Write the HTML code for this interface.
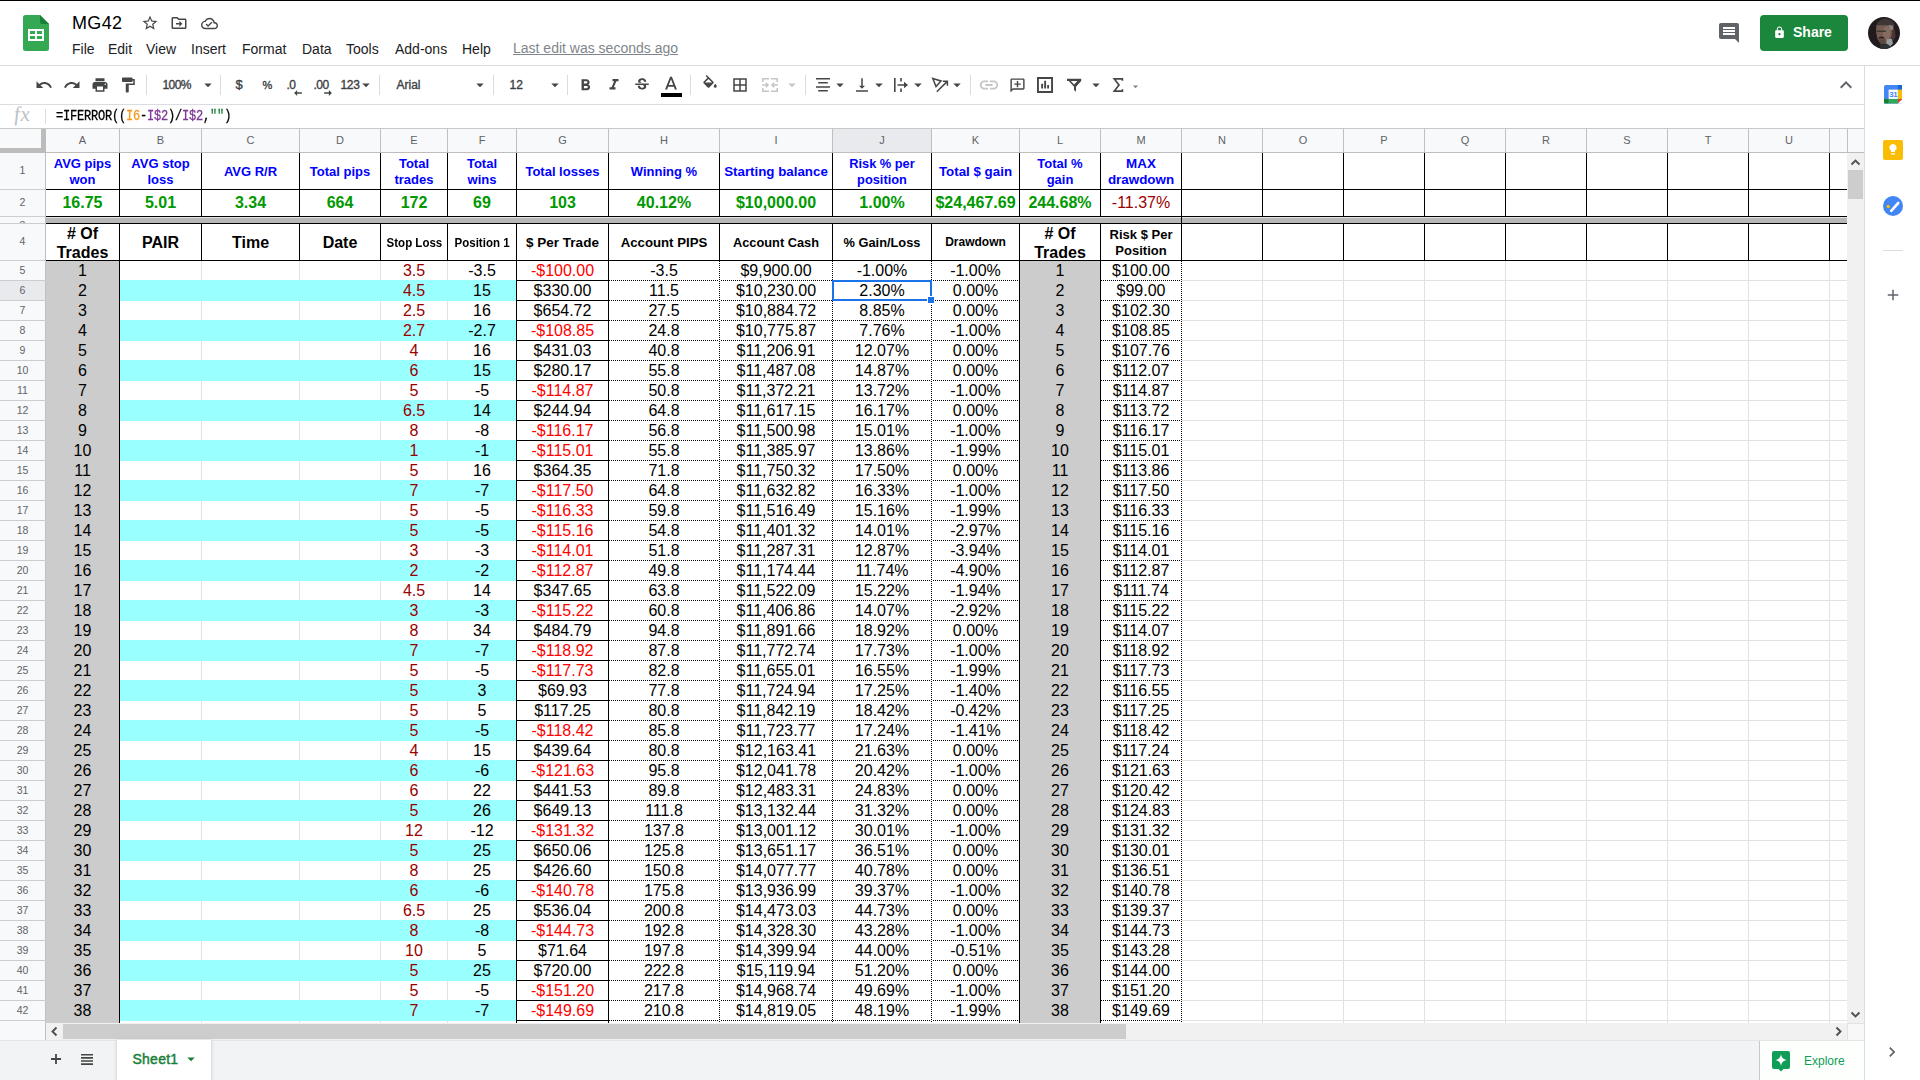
<!DOCTYPE html>
<html><head><meta charset="utf-8"><title>MG42 - Google Sheets</title>
<style>
html,body{margin:0;padding:0;}
body{width:1920px;height:1080px;overflow:hidden;background:#fff;font-family:"Liberation Sans",sans-serif;position:relative;color:#202124;}
#app{position:absolute;left:0;top:0;width:1920px;height:1080px;overflow:hidden;}
#app div,#app svg,#app span.a{position:absolute;}
#grid{left:0;top:0;width:1847px;height:1023px;overflow:hidden;}
#grid div{position:absolute;}
.t{text-align:center;white-space:nowrap;overflow:visible;color:#000;}
.m{display:flex;align-items:center;justify-content:center;}
.m span{display:block;}
.d{font-size:16px;}
.dr{color:#990000;}
.rd{color:#ff0000;}
.r1{font-size:13px;font-weight:bold;color:#0000ff;}
.r2{font-size:16px;font-weight:bold;color:#009900;}
.r2m{font-size:16px;color:#990000;}
.hb{font-weight:bold;}
.h13{font-size:13.33px;font-weight:bold;}
.h12{font-size:12px;font-weight:bold;}
.ch{font-size:11px;color:#5f6368;}
.rh{font-size:10.5px;color:#5f6368;}
.dh{height:1px;background:repeating-linear-gradient(90deg,#000 0 1px,#fff 1px 2px);}
.dv{width:1px;background:repeating-linear-gradient(180deg,#000 0 1px,#fff 1px 2px);}
.menu{top:40px;height:18px;line-height:18px;font-size:14px;color:#202124;white-space:nowrap;}
.ic{width:18px;height:18px;top:76px;fill:#444746;}
.sep{top:75px;width:1px;height:20px;background:#dadce0;}
.dd{width:18px;height:18px;top:76px;fill:#444746;}
.tb{top:76px;height:18px;line-height:18px;font-size:12px;color:#3c4043;white-space:nowrap;letter-spacing:-0.5px;-webkit-text-stroke:0.35px #3c4043;}
</style></head><body><div id="app">

<!-- top black line -->
<div style="left:0;top:0;width:1920px;height:1px;background:#000"></div>
<!-- Sheets logo -->
<svg style="left:23px;top:15px;width:26px;height:36px" viewBox="0 0 26 36">
<path d="M2.5 0H17l9 9v24.5a2.5 2.5 0 0 1-2.5 2.5h-21A2.5 2.5 0 0 1 0 33.500V2.5A2.500 2.500 0 0 1 2.500 0z" fill="#34a853"/>
<path d="M17 0l9 9h-6.500A2.500 2.500 0 0 1 17 6.500z" fill="#188038"/>
<path d="M5 14h16v12H5zM7 16v3h5v-3zM14 16v3h5v-3zM7 21v3h5v-3zM14 21v3h5v-3z" fill="#fff" fill-rule="evenodd"/>
</svg>
<!-- title -->
<div style="left:72px;top:11px;height:24px;line-height:24px;font-size:18px;letter-spacing:0.35px;color:#000;white-space:nowrap">MG42</div>
<svg style="left:141px;top:14px;width:18px;height:18px;fill:#444746" viewBox="0 0 24 24"><path d="M22 9.240l-7.190-.62L12 2 9.190 8.630 2 9.240l5.460 4.730L5.820 21 12 17.270 18.180 21l-1.630-7.030L22 9.240zM12 15.400l-3.760 2.270 1-4.280-3.320-2.880 4.380-.38L12 6.100l1.710 4.040 4.380.38-3.320 2.880 1 4.280L12 15.400z"/></svg>
<svg style="left:170px;top:14px;width:18px;height:18px;fill:#444746" viewBox="0 0 24 24"><path d="M20 6h-8l-2-2H4c-1.100 0-2 .9-2 2v12c0 1.100.9 2 2 2h16c1.100 0 2-.9 2-2V8c0-1.100-.9-2-2-2zm0 12H4V6h5.170l2 2H20v10zm-7.500-1l4-4-4-4v3H8v2h4.500v3z"/></svg>
<svg style="left:201px;top:15px;width:17px;height:17px;fill:#444746" viewBox="0 0 24 24"><path d="M19.350 10.040C18.670 6.590 15.640 4 12 4 9.110 4 6.600 5.640 5.350 8.040 2.340 8.360 0 10.910 0 14c0 3.310 2.690 6 6 6h13c2.760 0 5-2.240 5-5 0-2.640-2.050-4.780-4.650-4.960zM19 18H6c-2.210 0-4-1.790-4-4 0-2.050 1.530-3.760 3.560-3.970l1.070-.11.5-.95C8.080 7.140 9.940 6 12 6c2.620 0 4.880 1.860 5.390 4.430l.3 1.500 1.530.11c1.560.1 2.780 1.410 2.780 2.960 0 1.650-1.350 3-3 3zm-9-3.820l-2.090-2.090L6.500 13.500 10 17l6.010-6.010-1.410-1.410z"/></svg>
<!-- menus -->
<div class="menu" style="left:72px">File</div>
<div class="menu" style="left:108px">Edit</div>
<div class="menu" style="left:146px">View</div>
<div class="menu" style="left:191px">Insert</div>
<div class="menu" style="left:242px">Format</div>
<div class="menu" style="left:302px">Data</div>
<div class="menu" style="left:346px">Tools</div>
<div class="menu" style="left:395px">Add-ons</div>
<div class="menu" style="left:462px">Help</div>
<div class="menu" style="left:513px;top:39px;color:#80868b;text-decoration:underline">Last edit was seconds ago</div>
<!-- comment / share / avatar -->
<svg style="left:1717px;top:21px;width:24px;height:24px;fill:#5f6368" viewBox="0 0 24 24"><path d="M21.990 4c0-1.100-.89-2-1.990-2H4c-1.100 0-2 .9-2 2v12c0 1.100.9 2 2 2h14l4 4-.01-18zM18 14H6v-2h12v2zm0-3H6V9h12v2zm0-3H6V6h12v2z"/></svg>
<div style="left:1760px;top:15px;width:88px;height:36px;border-radius:4px;background:#1b873d"></div>
<svg style="left:1773px;top:26px;width:13px;height:13px;fill:#fff" viewBox="0 0 24 24"><path d="M18 8h-1V6c0-2.760-2.240-5-5-5S7 3.240 7 6v2H6c-1.100 0-2 .9-2 2v10c0 1.100.9 2 2 2h12c1.100 0 2-.9 2-2V10c0-1.100-.9-2-2-2zm-6 9c-1.100 0-2-.9-2-2s.9-2 2-2 2 .9 2 2-.9 2-2 2zm3.100-9H8.900V6c0-1.710 1.390-3.100 3.100-3.100 1.710 0 3.100 1.390 3.100 3.100v2z"/></svg>
<div style="left:1793px;top:22px;height:20px;line-height:20px;font-size:14px;font-weight:bold;color:#fff;white-space:nowrap">Share</div>
<svg style="left:1868px;top:17px;width:32px;height:32px" viewBox="0 0 32 32">
<defs><clipPath id="avc"><circle cx="16" cy="16" r="16"/></clipPath><filter id="avb" x="-20%" y="-20%" width="140%" height="140%"><feGaussianBlur stdDeviation="0.7"/></filter></defs>
<g clip-path="url(#avc)"><rect width="32" height="32" fill="#221b1d"/>
<g filter="url(#avb)">
<path d="M8.500 8.500C9.500 3.500 14 1.300 18.500 1.800c4.500.5 7.500 3 8 7.200l-3.500 1-13.500-1z" fill="#3d3735"/>
<path d="M8.300 8.200h14.500l2 2.500-.3 7-2.200 5-5 4.300-4.800-.5-3-4.500-1.500-7z" fill="#735b51"/>
<ellipse cx="18.600" cy="16" rx="3.800" ry="7" fill="#866c61"/>
<path d="M20.800 8l4.500.8.300 4.200-3.800-.3z" fill="#8d827b"/>
<path d="M24 12.500l3 1 .5 6-2.500 5-1.500-4z" fill="#4a3431"/>
<rect x="8.500" y="13.500" width="9.500" height="1.500" fill="#3f3a33"/>
<path d="M10 21.800c1-2.400 4.500-3 6.300-1.300l.2 1.600c-2-.8-4.500-.6-6.500-.3z" fill="#33201d"/>
<path d="M11 22.500h6.500l-.5 4-4.500-.3z" fill="#5d463f"/>
<path d="M19 22.300l4.800-.5 1.200 4.800-3 2.800-4-1.600z" fill="#969ea1"/>
<path d="M11.800 27l4.200.8 2.200-1.200 3.200 1.700-.8 3.700h-8z" fill="#2a3033"/>
</g></g></svg>
<!-- header bottom border -->
<div style="left:0;top:65px;width:1920px;height:1px;background:#dadce0"></div>
<!-- toolbar -->
<svg class="ic" style="left:35px" viewBox="0 0 24 24"><path d="M12.500 8c-2.650 0-5.050.99-6.900 2.600L2 7v9h9l-3.620-3.620c1.390-1.160 3.160-1.880 5.120-1.880 3.540 0 6.550 2.310 7.600 5.500l2.370-.78C21.080 11.030 17.150 8 12.500 8z"/></svg>
<svg class="ic" style="left:63px" viewBox="0 0 24 24"><path d="M18.400 10.600C16.550 8.990 14.150 8 11.500 8c-4.650 0-8.580 3.030-9.960 7.220L3.900 16c1.050-3.190 4.050-5.500 7.600-5.500 1.950 0 3.730.72 5.120 1.880L13 16h9V7l-3.600 3.600z"/></svg>
<svg class="ic" style="left:91px" viewBox="0 0 24 24"><path d="M19 8H5c-1.660 0-3 1.340-3 3v6h4v4h12v-4h4v-6c0-1.660-1.340-3-3-3zm-3 11H8v-5h8v5zm3-7c-.55 0-1-.45-1-1s.45-1 1-1 1 .45 1 1-.45 1-1 1zm-1-9H6v4h12V3z"/></svg>
<svg class="ic" style="left:119px" viewBox="0 0 24 24"><path d="M18 4V3c0-.55-.45-1-1-1H5c-.55 0-1 .45-1 1v4c0 .55.45 1 1 1h12c.55 0 1-.45 1-1V6h1v4H9v11c0 .55.45 1 1 1h2c.55 0 1-.45 1-1v-9h8V4h-3z"/></svg>
<div class="sep" style="left:146px"></div>
<div class="tb" style="left:162.500px;letter-spacing:-0.600px">100%</div>
<svg class="dd" style="left:199px" viewBox="0 0 24 24"><path d="M7 10l5 5 5-5z"/></svg>
<div class="sep" style="left:220px"></div>
<div class="tb" style="left:235.500px;font-size:13px">$</div>
<div class="tb" style="left:262.500px;font-size:11px;letter-spacing:0">%</div>
<div class="tb" style="left:286.500px">.0</div>
<svg style="left:294px;top:90px;width:8px;height:6px;fill:#444746" viewBox="0 0 9 7"><path d="M3.500 0L0 3.500 3.500 7V4.300H9V2.700H3.500z"/></svg>
<div class="tb" style="left:313.500px">.00</div>
<svg style="left:324px;top:90px;width:8px;height:6px;fill:#444746" viewBox="0 0 9 7"><path d="M5.500 0L9 3.500 5.500 7V4.300H0V2.700h5.500z"/></svg>
<div class="tb" style="left:340.500px;letter-spacing:-0.300px">123</div>
<svg class="dd" style="left:357px" viewBox="0 0 24 24"><path d="M7 10l5 5 5-5z"/></svg>
<div class="sep" style="left:379px"></div>
<div class="tb" style="left:396.500px;letter-spacing:0">Arial</div>
<svg class="dd" style="left:471px" viewBox="0 0 24 24"><path d="M7 10l5 5 5-5z"/></svg>
<div class="sep" style="left:493px"></div>
<div class="tb" style="left:509.500px;letter-spacing:0">12</div>
<svg class="dd" style="left:546px" viewBox="0 0 24 24"><path d="M7 10l5 5 5-5z"/></svg>
<div class="sep" style="left:567px"></div>
<svg class="ic" style="left:575.500px;top:75.500px;width:19px;height:19px" viewBox="0 0 24 24"><path d="M15.600 10.790c.97-.67 1.650-1.770 1.650-2.790 0-2.260-1.750-4-4-4H7v14h7.040c2.090 0 3.710-1.700 3.710-3.790 0-1.520-.86-2.820-2.150-3.420zM10 6.500h3c.83 0 1.500.67 1.500 1.500s-.67 1.500-1.500 1.500h-3v-3zm3.500 9H10v-3h3.500c.83 0 1.500.67 1.500 1.500s-.67 1.500-1.500 1.500z"/></svg>
<svg class="ic" style="left:605px" viewBox="0 0 24 24"><path d="M10 4v3h2.210l-3.420 8H6v3h8v-3h-2.210l3.420-8H18V4z"/></svg>
<svg class="ic" style="left:633px" viewBox="0 0 24 24"><path d="M7.240 8.750c-.26-.48-.39-1.030-.39-1.670 0-.61.130-1.160.4-1.670.26-.5.630-.93 1.110-1.290.48-.35 1.050-.63 1.700-.83.660-.19 1.390-.29 2.180-.29.810 0 1.540.11 2.210.34.660.22 1.230.54 1.690.94.470.4.830.88 1.080 1.430.25.550.38 1.150.38 1.810h-3.010c0-.31-.05-.59-.15-.85-.09-.27-.24-.49-.44-.68-.2-.19-.45-.33-.75-.44-.3-.1-.66-.16-1.060-.16-.39 0-.74.04-1.030.13-.29.09-.53.21-.72.360-.19.160-.34.340-.44.550-.1.210-.15.430-.15.660 0 .48.250.88.740 1.210.38.250.77.480 1.410.7H7.390c-.05-.08-.11-.17-.15-.25zM21 12v-2H3v2h9.620c.18.070.4.140.55.2.37.170.66.340.87.510.21.170.35.360.43.570.07.2.11.430.11.690 0 .23-.05.450-.14.660-.09.2-.23.380-.42.530-.19.150-.42.260-.71.350-.29.080-.63.130-1.010.13-.43 0-.83-.04-1.180-.13s-.66-.23-.91-.42c-.25-.19-.45-.44-.59-.75-.14-.31-.25-.76-.25-1.210H6.400c0 .55.080 1.130.24 1.580.16.450.37.850.65 1.210.28.350.6.660.98.920.37.260.78.480 1.220.65.440.17.900.3 1.380.39.480.08.960.13 1.440.13.8 0 1.530-.09 2.180-.28s1.210-.45 1.670-.79c.46-.34.820-.77 1.070-1.270s.38-1.070.38-1.710c0-.6-.1-1.140-.31-1.610-.05-.11-.11-.23-.17-.33H21z"/></svg>
<svg class="ic" style="left:660px;top:74px;width:22px;height:22px" viewBox="0 0 24 24"><path d="M11 3L5.500 17h2.250l1.120-3h6.250l1.120 3h2.250L13 3h-2zm-1.380 9L12 5.670 14.380 12H9.620z"/></svg>
<div style="left:661px;top:93px;width:21px;height:4px;background:#000"></div>
<div class="sep" style="left:690px"></div>
<svg class="ic" style="left:701px;top:75px" viewBox="0 0 24 24"><path d="M16.560 8.940L7.620 0 6.210 1.410l2.380 2.380-5.150 5.150c-.59.59-.59 1.540 0 2.120l5.500 5.500c.29.29.68.44 1.060.44s.77-.15 1.060-.44l5.500-5.500c.59-.58.59-1.530 0-2.120zM5.210 10L10 5.210 14.790 10H5.210zM19 11.500s-2 2.170-2 3.500c0 1.100.9 2 2 2s2-.9 2-2c0-1.330-2-3.500-2-3.500z"/></svg>
<svg class="ic" style="left:731px" viewBox="0 0 24 24"><path d="M3 3v18h18V3H3zm8 16H5v-6h6v6zm0-8H5V5h6v6zm8 8h-6v-6h6v6zm0-8h-6V5h6v6z"/></svg>
<!-- merge (disabled) -->
<svg style="left:761px;top:76px;width:18px;height:18px;fill:none;stroke:#c4c7c5;stroke-width:1.600" viewBox="0 0 18 18"><path d="M1.800 6V2.800H8M10 2.800h6.200V6M1.800 12v3.200H8M10 15.200h6.200V12M1.200 9h5.600M4.800 6.800L7 9l-2.200 2.200M16.800 9h-5.600M13.200 6.800L11 9l2.200 2.200"/></svg>
<svg style="left:783px;top:76px;width:18px;height:18px;fill:#c4c7c5" viewBox="0 0 24 24"><path d="M7 10l5 5 5-5z"/></svg>
<div class="sep" style="left:805px"></div>
<svg class="ic" style="left:814px" viewBox="0 0 18 18"><path d="M2 2.100h14v1.500H2zM4.200 6.100h9.600v1.500H4.200zM2 10.200h14v1.500H2zM4.200 14.100h9.600v1.500H4.200z"/></svg>
<svg class="dd" style="left:831px" viewBox="0 0 24 24"><path d="M7 10l5 5 5-5z"/></svg>
<svg class="ic" style="left:853px" viewBox="0 0 24 24"><path d="M16 13h-3V3h-2v10H8l4 4 4-4zM4 19v2h16v-2H4z"/></svg>
<svg class="dd" style="left:870px" viewBox="0 0 24 24"><path d="M7 10l5 5 5-5z"/></svg>
<!-- overflow/wrap icon -->
<svg class="ic" style="left:892px" viewBox="0 0 18 18"><path d="M2 2h1.600v14H2zM8.200 2h1.600v3.500H8.200zM8.200 12.500h1.600V16H8.200zM5.500 8.200h6.500V5.800L16 9l-4 3.200V9.800H5.500z"/></svg>
<svg class="dd" style="left:909px" viewBox="0 0 24 24"><path d="M7 10l5 5 5-5z"/></svg>
<!-- rotate icon -->
<svg class="ic" style="left:931px;fill:none;stroke:#444746;stroke-width:1.500" viewBox="0 0 18 18"><path d="M1.800 2.500L10 5l-5 5.600zM5.800 15.800L16 5.600M11.800 5.200h4.600v4.600" stroke-linejoin="miter"/></svg>
<svg class="dd" style="left:948px" viewBox="0 0 24 24"><path d="M7 10l5 5 5-5z"/></svg>
<div class="sep" style="left:970px"></div>
<svg style="left:978px;top:74px;width:22px;height:22px;fill:#c4c7c5" viewBox="0 0 24 24"><path d="M3.900 12c0-1.710 1.390-3.100 3.100-3.100h4V7H7c-2.760 0-5 2.240-5 5s2.240 5 5 5h4v-1.900H7c-1.710 0-3.100-1.390-3.100-3.100zM8 13h8v-2H8v2zm9-6h-4v1.900h4c1.710 0 3.100 1.390 3.100 3.100s-1.390 3.100-3.100 3.100h-4V17h4c2.760 0 5-2.240 5-5s-2.240-5-5-5z"/></svg>
<svg class="ic" style="left:1008.500px;top:76.500px;width:17px;height:17px;transform:scaleX(-1)" viewBox="0 0 24 24"><path d="M22 4c0-1.100-.9-2-2-2H4c-1.100 0-2 .9-2 2v12c0 1.100.9 2 2 2h14l4 4V4zm-2 13.170L18.830 16H4V4h16v13.170zM13 5.500h-2v3.500H7.500v2H11v3.500h2V11h3.500V9H13z"/></svg>
<svg class="ic" style="left:1036px;top:76px;width:18px;height:18px" viewBox="0 0 18 18"><path d="M1 1h16v16H1zM2.900 2.900v12.200h12.200V2.900zM5.200 7.800h1.900v4.700H5.200zM8.200 4.700h1.900v7.800H8.200zM11.200 9h1.800v3.500h-1.800z" fill-rule="evenodd"/></svg>
<svg class="ic" style="left:1065px;top:76px" viewBox="0 0 18 18"><path d="M2 2.800h14.200v2.100l-5.200 5.900v4.900l-2-1.700v-3.200L3.800 4.900H2zM5.900 4.900l3.200 3.700 3.200-3.700z" fill-rule="evenodd"/></svg>
<svg class="dd" style="left:1087px" viewBox="0 0 24 24"><path d="M7 10l5 5 5-5z"/></svg>
<svg class="ic" style="left:1109px;top:76px;fill:none;stroke:#444746;stroke-width:1.700" viewBox="0 0 18 18"><path d="M13.400 4.800V2.900H5.300l4.700 6.100-4.700 6.100h8.100V13.200" stroke-linejoin="miter" stroke-miterlimit="3"/></svg>
<svg style="left:1129px;top:79.500px;width:13px;height:13px;fill:#80868b" viewBox="0 0 24 24"><path d="M7 10l5 5 5-5z"/></svg>
<svg style="left:1834px;top:73px;width:24px;height:24px;fill:#5f6368" viewBox="0 0 24 24"><path d="M12 8l-6 6 1.410 1.410L12 10.830l4.590 4.580L18 14z"/></svg>
<!-- toolbar bottom border -->
<div style="left:0;top:104px;width:1864px;height:1px;background:#dadce0"></div>
<!-- formula bar -->
<div style="left:14px;top:103px;height:23px;line-height:22px;font-family:'Liberation Serif',serif;font-style:italic;font-size:21px;color:#bdc1c6;white-space:nowrap;letter-spacing:0.5px;transform:skewX(3deg)">fx</div>
<div style="left:45px;top:109px;width:1px;height:15px;background:#dadce0"></div>
<div id="fm" style="left:56px;top:106px;height:20px;line-height:20px;font-family:'Liberation Mono',monospace;font-size:12px;letter-spacing:-0.200px;transform:scaleY(1.180);transform-origin:left center;color:#000;-webkit-text-stroke:0.250px;white-space:nowrap">=IFERROR((<span style="color:#f7981d">I6</span>-<span style="color:#7e3794">I$2</span>)/<span style="color:#7e3794">I$2</span>,<span style="color:#188038">""</span>)</div>
<div style="left:0;top:128px;width:1864px;height:1px;background:#c8c8c8"></div>

<div id="grid">
<div style="left:0px;top:129px;width:1847px;height:894px;background:#fff;"></div>
<div style="left:119px;top:261px;width:1px;height:762px;background:#e2e2e2;"></div>
<div style="left:201px;top:261px;width:1px;height:762px;background:#e2e2e2;"></div>
<div style="left:299px;top:261px;width:1px;height:762px;background:#e2e2e2;"></div>
<div style="left:380px;top:261px;width:1px;height:762px;background:#e2e2e2;"></div>
<div style="left:447px;top:261px;width:1px;height:762px;background:#e2e2e2;"></div>
<div style="left:516px;top:261px;width:1px;height:762px;background:#e2e2e2;"></div>
<div style="left:608px;top:261px;width:1px;height:762px;background:#e2e2e2;"></div>
<div style="left:719px;top:261px;width:1px;height:762px;background:#e2e2e2;"></div>
<div style="left:832px;top:261px;width:1px;height:762px;background:#e2e2e2;"></div>
<div style="left:931px;top:261px;width:1px;height:762px;background:#e2e2e2;"></div>
<div style="left:1019px;top:261px;width:1px;height:762px;background:#e2e2e2;"></div>
<div style="left:1100px;top:261px;width:1px;height:762px;background:#e2e2e2;"></div>
<div style="left:1181px;top:261px;width:1px;height:762px;background:#e2e2e2;"></div>
<div style="left:1262px;top:261px;width:1px;height:762px;background:#e2e2e2;"></div>
<div style="left:1343px;top:261px;width:1px;height:762px;background:#e2e2e2;"></div>
<div style="left:1424px;top:261px;width:1px;height:762px;background:#e2e2e2;"></div>
<div style="left:1505px;top:261px;width:1px;height:762px;background:#e2e2e2;"></div>
<div style="left:1586px;top:261px;width:1px;height:762px;background:#e2e2e2;"></div>
<div style="left:1667px;top:261px;width:1px;height:762px;background:#e2e2e2;"></div>
<div style="left:1748px;top:261px;width:1px;height:762px;background:#e2e2e2;"></div>
<div style="left:1829px;top:261px;width:1px;height:762px;background:#e2e2e2;"></div>
<div style="left:46px;top:280px;width:1801px;height:1px;background:#e2e2e2;"></div>
<div style="left:46px;top:300px;width:1801px;height:1px;background:#e2e2e2;"></div>
<div style="left:46px;top:320px;width:1801px;height:1px;background:#e2e2e2;"></div>
<div style="left:46px;top:340px;width:1801px;height:1px;background:#e2e2e2;"></div>
<div style="left:46px;top:360px;width:1801px;height:1px;background:#e2e2e2;"></div>
<div style="left:46px;top:380px;width:1801px;height:1px;background:#e2e2e2;"></div>
<div style="left:46px;top:400px;width:1801px;height:1px;background:#e2e2e2;"></div>
<div style="left:46px;top:420px;width:1801px;height:1px;background:#e2e2e2;"></div>
<div style="left:46px;top:440px;width:1801px;height:1px;background:#e2e2e2;"></div>
<div style="left:46px;top:460px;width:1801px;height:1px;background:#e2e2e2;"></div>
<div style="left:46px;top:480px;width:1801px;height:1px;background:#e2e2e2;"></div>
<div style="left:46px;top:500px;width:1801px;height:1px;background:#e2e2e2;"></div>
<div style="left:46px;top:520px;width:1801px;height:1px;background:#e2e2e2;"></div>
<div style="left:46px;top:540px;width:1801px;height:1px;background:#e2e2e2;"></div>
<div style="left:46px;top:560px;width:1801px;height:1px;background:#e2e2e2;"></div>
<div style="left:46px;top:580px;width:1801px;height:1px;background:#e2e2e2;"></div>
<div style="left:46px;top:600px;width:1801px;height:1px;background:#e2e2e2;"></div>
<div style="left:46px;top:620px;width:1801px;height:1px;background:#e2e2e2;"></div>
<div style="left:46px;top:640px;width:1801px;height:1px;background:#e2e2e2;"></div>
<div style="left:46px;top:660px;width:1801px;height:1px;background:#e2e2e2;"></div>
<div style="left:46px;top:680px;width:1801px;height:1px;background:#e2e2e2;"></div>
<div style="left:46px;top:700px;width:1801px;height:1px;background:#e2e2e2;"></div>
<div style="left:46px;top:720px;width:1801px;height:1px;background:#e2e2e2;"></div>
<div style="left:46px;top:740px;width:1801px;height:1px;background:#e2e2e2;"></div>
<div style="left:46px;top:760px;width:1801px;height:1px;background:#e2e2e2;"></div>
<div style="left:46px;top:780px;width:1801px;height:1px;background:#e2e2e2;"></div>
<div style="left:46px;top:800px;width:1801px;height:1px;background:#e2e2e2;"></div>
<div style="left:46px;top:820px;width:1801px;height:1px;background:#e2e2e2;"></div>
<div style="left:46px;top:840px;width:1801px;height:1px;background:#e2e2e2;"></div>
<div style="left:46px;top:860px;width:1801px;height:1px;background:#e2e2e2;"></div>
<div style="left:46px;top:880px;width:1801px;height:1px;background:#e2e2e2;"></div>
<div style="left:46px;top:900px;width:1801px;height:1px;background:#e2e2e2;"></div>
<div style="left:46px;top:920px;width:1801px;height:1px;background:#e2e2e2;"></div>
<div style="left:46px;top:940px;width:1801px;height:1px;background:#e2e2e2;"></div>
<div style="left:46px;top:960px;width:1801px;height:1px;background:#e2e2e2;"></div>
<div style="left:46px;top:980px;width:1801px;height:1px;background:#e2e2e2;"></div>
<div style="left:46px;top:1000px;width:1801px;height:1px;background:#e2e2e2;"></div>
<div style="left:46px;top:1020px;width:1801px;height:1px;background:#e2e2e2;"></div>
<div style="left:46px;top:1040px;width:1801px;height:1px;background:#e2e2e2;"></div>
<div style="left:46px;top:261px;width:73px;height:762px;background:#cccccc;"></div>
<div style="left:1020px;top:261px;width:80px;height:762px;background:#cccccc;"></div>
<div style="left:120px;top:280px;width:397px;height:21px;background:#99ffff;"></div>
<div style="left:120px;top:320px;width:397px;height:21px;background:#99ffff;"></div>
<div style="left:120px;top:360px;width:397px;height:21px;background:#99ffff;"></div>
<div style="left:120px;top:400px;width:397px;height:21px;background:#99ffff;"></div>
<div style="left:120px;top:440px;width:397px;height:21px;background:#99ffff;"></div>
<div style="left:120px;top:480px;width:397px;height:21px;background:#99ffff;"></div>
<div style="left:120px;top:520px;width:397px;height:21px;background:#99ffff;"></div>
<div style="left:120px;top:560px;width:397px;height:21px;background:#99ffff;"></div>
<div style="left:120px;top:600px;width:397px;height:21px;background:#99ffff;"></div>
<div style="left:120px;top:640px;width:397px;height:21px;background:#99ffff;"></div>
<div style="left:120px;top:680px;width:397px;height:21px;background:#99ffff;"></div>
<div style="left:120px;top:720px;width:397px;height:21px;background:#99ffff;"></div>
<div style="left:120px;top:760px;width:397px;height:21px;background:#99ffff;"></div>
<div style="left:120px;top:800px;width:397px;height:21px;background:#99ffff;"></div>
<div style="left:120px;top:840px;width:397px;height:21px;background:#99ffff;"></div>
<div style="left:120px;top:880px;width:397px;height:21px;background:#99ffff;"></div>
<div style="left:120px;top:920px;width:397px;height:21px;background:#99ffff;"></div>
<div style="left:120px;top:960px;width:397px;height:21px;background:#99ffff;"></div>
<div style="left:120px;top:1000px;width:397px;height:21px;background:#99ffff;"></div>
<div style="left:46px;top:217px;width:1801px;height:6px;background:#b7b7b7;"></div>
<div style="left:46px;top:217px;width:1801px;height:1px;background:#e6e6e6;"></div>
<div style="left:1181px;top:217px;width:1px;height:6px;background:#000;"></div>
<div style="left:46px;top:189px;width:1801px;height:1px;background:#000;"></div>
<div style="left:46px;top:216px;width:1801px;height:1px;background:#000;"></div>
<div style="left:46px;top:223px;width:1801px;height:1px;background:#000;"></div>
<div style="left:46px;top:260px;width:1801px;height:1px;background:#000;"></div>
<div style="left:119px;top:153px;width:1px;height:64px;background:#000;"></div>
<div style="left:119px;top:223px;width:1px;height:38px;background:#000;"></div>
<div style="left:201px;top:153px;width:1px;height:64px;background:#000;"></div>
<div style="left:201px;top:223px;width:1px;height:38px;background:#000;"></div>
<div style="left:299px;top:153px;width:1px;height:64px;background:#000;"></div>
<div style="left:299px;top:223px;width:1px;height:38px;background:#000;"></div>
<div style="left:380px;top:153px;width:1px;height:64px;background:#000;"></div>
<div style="left:380px;top:223px;width:1px;height:38px;background:#000;"></div>
<div style="left:447px;top:153px;width:1px;height:64px;background:#000;"></div>
<div style="left:447px;top:223px;width:1px;height:38px;background:#000;"></div>
<div style="left:516px;top:153px;width:1px;height:64px;background:#000;"></div>
<div style="left:516px;top:223px;width:1px;height:38px;background:#000;"></div>
<div style="left:608px;top:153px;width:1px;height:64px;background:#000;"></div>
<div style="left:608px;top:223px;width:1px;height:38px;background:#000;"></div>
<div style="left:719px;top:153px;width:1px;height:64px;background:#000;"></div>
<div style="left:719px;top:223px;width:1px;height:38px;background:#000;"></div>
<div style="left:832px;top:153px;width:1px;height:64px;background:#000;"></div>
<div style="left:832px;top:223px;width:1px;height:38px;background:#000;"></div>
<div style="left:931px;top:153px;width:1px;height:64px;background:#000;"></div>
<div style="left:931px;top:223px;width:1px;height:38px;background:#000;"></div>
<div style="left:1019px;top:153px;width:1px;height:64px;background:#000;"></div>
<div style="left:1019px;top:223px;width:1px;height:38px;background:#000;"></div>
<div style="left:1100px;top:153px;width:1px;height:64px;background:#000;"></div>
<div style="left:1100px;top:223px;width:1px;height:38px;background:#000;"></div>
<div style="left:1181px;top:153px;width:1px;height:64px;background:#000;"></div>
<div style="left:1181px;top:223px;width:1px;height:38px;background:#000;"></div>
<div style="left:1262px;top:153px;width:1px;height:64px;background:#000;"></div>
<div style="left:1262px;top:223px;width:1px;height:38px;background:#000;"></div>
<div style="left:1343px;top:153px;width:1px;height:64px;background:#000;"></div>
<div style="left:1343px;top:223px;width:1px;height:38px;background:#000;"></div>
<div style="left:1424px;top:153px;width:1px;height:64px;background:#000;"></div>
<div style="left:1424px;top:223px;width:1px;height:38px;background:#000;"></div>
<div style="left:1505px;top:153px;width:1px;height:64px;background:#000;"></div>
<div style="left:1505px;top:223px;width:1px;height:38px;background:#000;"></div>
<div style="left:1586px;top:153px;width:1px;height:64px;background:#000;"></div>
<div style="left:1586px;top:223px;width:1px;height:38px;background:#000;"></div>
<div style="left:1667px;top:153px;width:1px;height:64px;background:#000;"></div>
<div style="left:1667px;top:223px;width:1px;height:38px;background:#000;"></div>
<div style="left:1748px;top:153px;width:1px;height:64px;background:#000;"></div>
<div style="left:1748px;top:223px;width:1px;height:38px;background:#000;"></div>
<div style="left:1829px;top:153px;width:1px;height:64px;background:#000;"></div>
<div style="left:1829px;top:223px;width:1px;height:38px;background:#000;"></div>
<div style="left:119px;top:261px;width:1px;height:762px;background:#000;"></div>
<div style="left:516px;top:261px;width:1px;height:762px;background:#000;"></div>
<div style="left:608px;top:261px;width:1px;height:762px;background:#000;"></div>
<div style="left:517px;top:280px;width:92px;height:1px;background:#000;"></div>
<div style="left:517px;top:300px;width:92px;height:1px;background:#000;"></div>
<div style="left:517px;top:320px;width:92px;height:1px;background:#000;"></div>
<div style="left:517px;top:340px;width:92px;height:1px;background:#000;"></div>
<div style="left:517px;top:360px;width:92px;height:1px;background:#000;"></div>
<div style="left:517px;top:380px;width:92px;height:1px;background:#000;"></div>
<div style="left:517px;top:400px;width:92px;height:1px;background:#000;"></div>
<div style="left:517px;top:420px;width:92px;height:1px;background:#000;"></div>
<div style="left:517px;top:440px;width:92px;height:1px;background:#000;"></div>
<div style="left:517px;top:460px;width:92px;height:1px;background:#000;"></div>
<div style="left:517px;top:480px;width:92px;height:1px;background:#000;"></div>
<div style="left:517px;top:500px;width:92px;height:1px;background:#000;"></div>
<div style="left:517px;top:520px;width:92px;height:1px;background:#000;"></div>
<div style="left:517px;top:540px;width:92px;height:1px;background:#000;"></div>
<div style="left:517px;top:560px;width:92px;height:1px;background:#000;"></div>
<div style="left:517px;top:580px;width:92px;height:1px;background:#000;"></div>
<div style="left:517px;top:600px;width:92px;height:1px;background:#000;"></div>
<div style="left:517px;top:620px;width:92px;height:1px;background:#000;"></div>
<div style="left:517px;top:640px;width:92px;height:1px;background:#000;"></div>
<div style="left:517px;top:660px;width:92px;height:1px;background:#000;"></div>
<div style="left:517px;top:680px;width:92px;height:1px;background:#000;"></div>
<div style="left:517px;top:700px;width:92px;height:1px;background:#000;"></div>
<div style="left:517px;top:720px;width:92px;height:1px;background:#000;"></div>
<div style="left:517px;top:740px;width:92px;height:1px;background:#000;"></div>
<div style="left:517px;top:760px;width:92px;height:1px;background:#000;"></div>
<div style="left:517px;top:780px;width:92px;height:1px;background:#000;"></div>
<div style="left:517px;top:800px;width:92px;height:1px;background:#000;"></div>
<div style="left:517px;top:820px;width:92px;height:1px;background:#000;"></div>
<div style="left:517px;top:840px;width:92px;height:1px;background:#000;"></div>
<div style="left:517px;top:860px;width:92px;height:1px;background:#000;"></div>
<div style="left:517px;top:880px;width:92px;height:1px;background:#000;"></div>
<div style="left:517px;top:900px;width:92px;height:1px;background:#000;"></div>
<div style="left:517px;top:920px;width:92px;height:1px;background:#000;"></div>
<div style="left:517px;top:940px;width:92px;height:1px;background:#000;"></div>
<div style="left:517px;top:960px;width:92px;height:1px;background:#000;"></div>
<div style="left:517px;top:980px;width:92px;height:1px;background:#000;"></div>
<div style="left:517px;top:1000px;width:92px;height:1px;background:#000;"></div>
<div style="left:517px;top:1020px;width:92px;height:1px;background:#000;"></div>
<div style="left:517px;top:1040px;width:92px;height:1px;background:#000;"></div>
<div class="dh" style="left:609px;top:280px;width:410px"></div>
<div class="dh" style="left:1101px;top:280px;width:81px"></div>
<div class="dh" style="left:609px;top:300px;width:410px"></div>
<div class="dh" style="left:1101px;top:300px;width:81px"></div>
<div class="dh" style="left:609px;top:320px;width:410px"></div>
<div class="dh" style="left:1101px;top:320px;width:81px"></div>
<div class="dh" style="left:609px;top:340px;width:410px"></div>
<div class="dh" style="left:1101px;top:340px;width:81px"></div>
<div class="dh" style="left:609px;top:360px;width:410px"></div>
<div class="dh" style="left:1101px;top:360px;width:81px"></div>
<div class="dh" style="left:609px;top:380px;width:410px"></div>
<div class="dh" style="left:1101px;top:380px;width:81px"></div>
<div class="dh" style="left:609px;top:400px;width:410px"></div>
<div class="dh" style="left:1101px;top:400px;width:81px"></div>
<div class="dh" style="left:609px;top:420px;width:410px"></div>
<div class="dh" style="left:1101px;top:420px;width:81px"></div>
<div class="dh" style="left:609px;top:440px;width:410px"></div>
<div class="dh" style="left:1101px;top:440px;width:81px"></div>
<div class="dh" style="left:609px;top:460px;width:410px"></div>
<div class="dh" style="left:1101px;top:460px;width:81px"></div>
<div class="dh" style="left:609px;top:480px;width:410px"></div>
<div class="dh" style="left:1101px;top:480px;width:81px"></div>
<div class="dh" style="left:609px;top:500px;width:410px"></div>
<div class="dh" style="left:1101px;top:500px;width:81px"></div>
<div class="dh" style="left:609px;top:520px;width:410px"></div>
<div class="dh" style="left:1101px;top:520px;width:81px"></div>
<div class="dh" style="left:609px;top:540px;width:410px"></div>
<div class="dh" style="left:1101px;top:540px;width:81px"></div>
<div class="dh" style="left:609px;top:560px;width:410px"></div>
<div class="dh" style="left:1101px;top:560px;width:81px"></div>
<div class="dh" style="left:609px;top:580px;width:410px"></div>
<div class="dh" style="left:1101px;top:580px;width:81px"></div>
<div class="dh" style="left:609px;top:600px;width:410px"></div>
<div class="dh" style="left:1101px;top:600px;width:81px"></div>
<div class="dh" style="left:609px;top:620px;width:410px"></div>
<div class="dh" style="left:1101px;top:620px;width:81px"></div>
<div class="dh" style="left:609px;top:640px;width:410px"></div>
<div class="dh" style="left:1101px;top:640px;width:81px"></div>
<div class="dh" style="left:609px;top:660px;width:410px"></div>
<div class="dh" style="left:1101px;top:660px;width:81px"></div>
<div class="dh" style="left:609px;top:680px;width:410px"></div>
<div class="dh" style="left:1101px;top:680px;width:81px"></div>
<div class="dh" style="left:609px;top:700px;width:410px"></div>
<div class="dh" style="left:1101px;top:700px;width:81px"></div>
<div class="dh" style="left:609px;top:720px;width:410px"></div>
<div class="dh" style="left:1101px;top:720px;width:81px"></div>
<div class="dh" style="left:609px;top:740px;width:410px"></div>
<div class="dh" style="left:1101px;top:740px;width:81px"></div>
<div class="dh" style="left:609px;top:760px;width:410px"></div>
<div class="dh" style="left:1101px;top:760px;width:81px"></div>
<div class="dh" style="left:609px;top:780px;width:410px"></div>
<div class="dh" style="left:1101px;top:780px;width:81px"></div>
<div class="dh" style="left:609px;top:800px;width:410px"></div>
<div class="dh" style="left:1101px;top:800px;width:81px"></div>
<div class="dh" style="left:609px;top:820px;width:410px"></div>
<div class="dh" style="left:1101px;top:820px;width:81px"></div>
<div class="dh" style="left:609px;top:840px;width:410px"></div>
<div class="dh" style="left:1101px;top:840px;width:81px"></div>
<div class="dh" style="left:609px;top:860px;width:410px"></div>
<div class="dh" style="left:1101px;top:860px;width:81px"></div>
<div class="dh" style="left:609px;top:880px;width:410px"></div>
<div class="dh" style="left:1101px;top:880px;width:81px"></div>
<div class="dh" style="left:609px;top:900px;width:410px"></div>
<div class="dh" style="left:1101px;top:900px;width:81px"></div>
<div class="dh" style="left:609px;top:920px;width:410px"></div>
<div class="dh" style="left:1101px;top:920px;width:81px"></div>
<div class="dh" style="left:609px;top:940px;width:410px"></div>
<div class="dh" style="left:1101px;top:940px;width:81px"></div>
<div class="dh" style="left:609px;top:960px;width:410px"></div>
<div class="dh" style="left:1101px;top:960px;width:81px"></div>
<div class="dh" style="left:609px;top:980px;width:410px"></div>
<div class="dh" style="left:1101px;top:980px;width:81px"></div>
<div class="dh" style="left:609px;top:1000px;width:410px"></div>
<div class="dh" style="left:1101px;top:1000px;width:81px"></div>
<div class="dh" style="left:609px;top:1020px;width:410px"></div>
<div class="dh" style="left:1101px;top:1020px;width:81px"></div>
<div class="dh" style="left:609px;top:1040px;width:410px"></div>
<div class="dh" style="left:1101px;top:1040px;width:81px"></div>
<div class="dv" style="left:719px;top:261px;height:762px"></div>
<div class="dv" style="left:832px;top:261px;height:762px"></div>
<div class="dv" style="left:931px;top:261px;height:762px"></div>
<div class="dv" style="left:1181px;top:261px;height:762px"></div>
<div style="left:1100px;top:261px;width:1px;height:762px;background:#000;"></div>
<div style="left:1019px;top:261px;width:1px;height:762px;background:#000;"></div>
<div class="t m r1" style="left:46px;top:154px;width:73px;height:36px;font-size:13px;"><span style="line-height:16px">AVG pips<br>won</span></div>
<div class="t m r1" style="left:120px;top:154px;width:81px;height:36px;font-size:13px;"><span style="line-height:16px">AVG stop<br>loss</span></div>
<div class="t m r1" style="left:202px;top:154px;width:97px;height:36px;font-size:13px;"><span style="line-height:16px">AVG R/R</span></div>
<div class="t m r1" style="left:300px;top:154px;width:80px;height:36px;font-size:13px;"><span style="line-height:16px">Total pips</span></div>
<div class="t m r1" style="left:381px;top:154px;width:66px;height:36px;font-size:13px;"><span style="line-height:16px">Total<br>trades</span></div>
<div class="t m r1" style="left:448px;top:154px;width:68px;height:36px;font-size:13px;"><span style="line-height:16px">Total<br>wins</span></div>
<div class="t m r1" style="left:517px;top:154px;width:91px;height:36px;font-size:13px;"><span style="line-height:16px">Total losses</span></div>
<div class="t m r1" style="left:609px;top:154px;width:110px;height:36px;font-size:13px;"><span style="line-height:16px">Winning %</span></div>
<div class="t m r1" style="left:720px;top:154px;width:112px;height:36px;font-size:13.33px;"><span style="line-height:16px">Starting balance</span></div>
<div class="t m r1" style="left:833px;top:154px;width:98px;height:36px;font-size:12.8px;"><span style="line-height:16px">Risk % per<br>position</span></div>
<div class="t m r1" style="left:932px;top:154px;width:87px;height:36px;font-size:13.33px;"><span style="line-height:16px">Total $ gain</span></div>
<div class="t m r1" style="left:1020px;top:154px;width:80px;height:36px;font-size:13px;"><span style="line-height:16px">Total %<br>gain</span></div>
<div class="t m r1" style="left:1101px;top:154px;width:80px;height:36px;font-size:13.4px;"><span style="line-height:16px">MAX<br>drawdown</span></div>
<div class="t m r2" style="left:46px;top:189px;width:73px;height:26px;"><span style="line-height:19px">16.75</span></div>
<div class="t m r2" style="left:120px;top:189px;width:81px;height:26px;"><span style="line-height:19px">5.01</span></div>
<div class="t m r2" style="left:202px;top:189px;width:97px;height:26px;"><span style="line-height:19px">3.34</span></div>
<div class="t m r2" style="left:300px;top:189px;width:80px;height:26px;"><span style="line-height:19px">664</span></div>
<div class="t m r2" style="left:381px;top:189px;width:66px;height:26px;"><span style="line-height:19px">172</span></div>
<div class="t m r2" style="left:448px;top:189px;width:68px;height:26px;"><span style="line-height:19px">69</span></div>
<div class="t m r2" style="left:517px;top:189px;width:91px;height:26px;"><span style="line-height:19px">103</span></div>
<div class="t m r2" style="left:609px;top:189px;width:110px;height:26px;"><span style="line-height:19px">40.12%</span></div>
<div class="t m r2" style="left:720px;top:189px;width:112px;height:26px;"><span style="line-height:19px">$10,000.00</span></div>
<div class="t m r2" style="left:833px;top:189px;width:98px;height:26px;"><span style="line-height:19px">1.00%</span></div>
<div class="t m r2" style="left:932px;top:189px;width:87px;height:26px;"><span style="line-height:19px">$24,467.69</span></div>
<div class="t m r2" style="left:1020px;top:189px;width:80px;height:26px;"><span style="line-height:19px">244.68%</span></div>
<div class="t m r2m" style="left:1101px;top:189px;width:80px;height:26px;"><span style="line-height:19px">-11.37%</span></div>
<div class="t m hb" style="left:46px;top:225px;width:73px;height:36px;font-size:16px;"><span style="line-height:19px"># Of<br>Trades</span></div>
<div class="t m hb" style="left:120px;top:224px;width:81px;height:36px;font-size:16px;"><span style="line-height:19px">PAIR</span></div>
<div class="t m hb" style="left:202px;top:224px;width:97px;height:36px;font-size:16px;"><span style="line-height:19px">Time</span></div>
<div class="t m hb" style="left:300px;top:224px;width:80px;height:36px;font-size:16px;"><span style="line-height:19px">Date</span></div>
<div class="t m hb" style="left:381px;top:225px;width:66px;height:36px;font-size:13.01px;"><span style="line-height:16px;transform:scaleX(0.885)">Stop Loss</span></div>
<div class="t m hb" style="left:448px;top:225px;width:68px;height:36px;font-size:13.01px;"><span style="line-height:16px;transform:scaleX(0.885)">Position 1</span></div>
<div class="t m hb" style="left:517px;top:225px;width:91px;height:36px;font-size:13.5px;"><span style="line-height:16px">$ Per Trade</span></div>
<div class="t m hb" style="left:609px;top:225px;width:110px;height:36px;font-size:13.2px;"><span style="line-height:16px">Account PIPS</span></div>
<div class="t m hb" style="left:720px;top:225px;width:112px;height:36px;font-size:12.8px;"><span style="line-height:16px">Account Cash</span></div>
<div class="t m hb" style="left:833px;top:225px;width:98px;height:36px;font-size:12.8px;"><span style="line-height:16px">% Gain/Loss</span></div>
<div class="t m hb" style="left:932px;top:224px;width:87px;height:36px;font-size:12px;"><span style="line-height:14px">Drawdown</span></div>
<div class="t m hb" style="left:1020px;top:225px;width:80px;height:36px;font-size:16px;"><span style="line-height:19px"># Of<br>Trades</span></div>
<div class="t m hb" style="left:1101px;top:225px;width:80px;height:36px;font-size:13px;"><span style="line-height:16px">Risk $ Per<br>Position</span></div>
<div class="t d" style="left:46px;top:261px;width:73px;height:19px;line-height:19px;">1</div>
<div class="t d dr" style="left:381px;top:261px;width:66px;height:19px;line-height:19px;">3.5</div>
<div class="t d" style="left:448px;top:261px;width:68px;height:19px;line-height:19px;">-3.5</div>
<div class="t d rd" style="left:517px;top:261px;width:91px;height:19px;line-height:19px;">-$100.00</div>
<div class="t d" style="left:609px;top:261px;width:110px;height:19px;line-height:19px;">-3.5</div>
<div class="t d" style="left:720px;top:261px;width:112px;height:19px;line-height:19px;">$9,900.00</div>
<div class="t d" style="left:833px;top:261px;width:98px;height:19px;line-height:19px;">-1.00%</div>
<div class="t d" style="left:932px;top:261px;width:87px;height:19px;line-height:19px;">-1.00%</div>
<div class="t d" style="left:1020px;top:261px;width:80px;height:19px;line-height:19px;">1</div>
<div class="t d" style="left:1101px;top:261px;width:80px;height:19px;line-height:19px;">$100.00</div>
<div class="t d" style="left:46px;top:281px;width:73px;height:19px;line-height:19px;">2</div>
<div class="t d dr" style="left:381px;top:281px;width:66px;height:19px;line-height:19px;">4.5</div>
<div class="t d" style="left:448px;top:281px;width:68px;height:19px;line-height:19px;">15</div>
<div class="t d" style="left:517px;top:281px;width:91px;height:19px;line-height:19px;">$330.00</div>
<div class="t d" style="left:609px;top:281px;width:110px;height:19px;line-height:19px;">11.5</div>
<div class="t d" style="left:720px;top:281px;width:112px;height:19px;line-height:19px;">$10,230.00</div>
<div class="t d" style="left:833px;top:281px;width:98px;height:19px;line-height:19px;">2.30%</div>
<div class="t d" style="left:932px;top:281px;width:87px;height:19px;line-height:19px;">0.00%</div>
<div class="t d" style="left:1020px;top:281px;width:80px;height:19px;line-height:19px;">2</div>
<div class="t d" style="left:1101px;top:281px;width:80px;height:19px;line-height:19px;">$99.00</div>
<div class="t d" style="left:46px;top:301px;width:73px;height:19px;line-height:19px;">3</div>
<div class="t d dr" style="left:381px;top:301px;width:66px;height:19px;line-height:19px;">2.5</div>
<div class="t d" style="left:448px;top:301px;width:68px;height:19px;line-height:19px;">16</div>
<div class="t d" style="left:517px;top:301px;width:91px;height:19px;line-height:19px;">$654.72</div>
<div class="t d" style="left:609px;top:301px;width:110px;height:19px;line-height:19px;">27.5</div>
<div class="t d" style="left:720px;top:301px;width:112px;height:19px;line-height:19px;">$10,884.72</div>
<div class="t d" style="left:833px;top:301px;width:98px;height:19px;line-height:19px;">8.85%</div>
<div class="t d" style="left:932px;top:301px;width:87px;height:19px;line-height:19px;">0.00%</div>
<div class="t d" style="left:1020px;top:301px;width:80px;height:19px;line-height:19px;">3</div>
<div class="t d" style="left:1101px;top:301px;width:80px;height:19px;line-height:19px;">$102.30</div>
<div class="t d" style="left:46px;top:321px;width:73px;height:19px;line-height:19px;">4</div>
<div class="t d dr" style="left:381px;top:321px;width:66px;height:19px;line-height:19px;">2.7</div>
<div class="t d" style="left:448px;top:321px;width:68px;height:19px;line-height:19px;">-2.7</div>
<div class="t d rd" style="left:517px;top:321px;width:91px;height:19px;line-height:19px;">-$108.85</div>
<div class="t d" style="left:609px;top:321px;width:110px;height:19px;line-height:19px;">24.8</div>
<div class="t d" style="left:720px;top:321px;width:112px;height:19px;line-height:19px;">$10,775.87</div>
<div class="t d" style="left:833px;top:321px;width:98px;height:19px;line-height:19px;">7.76%</div>
<div class="t d" style="left:932px;top:321px;width:87px;height:19px;line-height:19px;">-1.00%</div>
<div class="t d" style="left:1020px;top:321px;width:80px;height:19px;line-height:19px;">4</div>
<div class="t d" style="left:1101px;top:321px;width:80px;height:19px;line-height:19px;">$108.85</div>
<div class="t d" style="left:46px;top:341px;width:73px;height:19px;line-height:19px;">5</div>
<div class="t d dr" style="left:381px;top:341px;width:66px;height:19px;line-height:19px;">4</div>
<div class="t d" style="left:448px;top:341px;width:68px;height:19px;line-height:19px;">16</div>
<div class="t d" style="left:517px;top:341px;width:91px;height:19px;line-height:19px;">$431.03</div>
<div class="t d" style="left:609px;top:341px;width:110px;height:19px;line-height:19px;">40.8</div>
<div class="t d" style="left:720px;top:341px;width:112px;height:19px;line-height:19px;">$11,206.91</div>
<div class="t d" style="left:833px;top:341px;width:98px;height:19px;line-height:19px;">12.07%</div>
<div class="t d" style="left:932px;top:341px;width:87px;height:19px;line-height:19px;">0.00%</div>
<div class="t d" style="left:1020px;top:341px;width:80px;height:19px;line-height:19px;">5</div>
<div class="t d" style="left:1101px;top:341px;width:80px;height:19px;line-height:19px;">$107.76</div>
<div class="t d" style="left:46px;top:361px;width:73px;height:19px;line-height:19px;">6</div>
<div class="t d dr" style="left:381px;top:361px;width:66px;height:19px;line-height:19px;">6</div>
<div class="t d" style="left:448px;top:361px;width:68px;height:19px;line-height:19px;">15</div>
<div class="t d" style="left:517px;top:361px;width:91px;height:19px;line-height:19px;">$280.17</div>
<div class="t d" style="left:609px;top:361px;width:110px;height:19px;line-height:19px;">55.8</div>
<div class="t d" style="left:720px;top:361px;width:112px;height:19px;line-height:19px;">$11,487.08</div>
<div class="t d" style="left:833px;top:361px;width:98px;height:19px;line-height:19px;">14.87%</div>
<div class="t d" style="left:932px;top:361px;width:87px;height:19px;line-height:19px;">0.00%</div>
<div class="t d" style="left:1020px;top:361px;width:80px;height:19px;line-height:19px;">6</div>
<div class="t d" style="left:1101px;top:361px;width:80px;height:19px;line-height:19px;">$112.07</div>
<div class="t d" style="left:46px;top:381px;width:73px;height:19px;line-height:19px;">7</div>
<div class="t d dr" style="left:381px;top:381px;width:66px;height:19px;line-height:19px;">5</div>
<div class="t d" style="left:448px;top:381px;width:68px;height:19px;line-height:19px;">-5</div>
<div class="t d rd" style="left:517px;top:381px;width:91px;height:19px;line-height:19px;">-$114.87</div>
<div class="t d" style="left:609px;top:381px;width:110px;height:19px;line-height:19px;">50.8</div>
<div class="t d" style="left:720px;top:381px;width:112px;height:19px;line-height:19px;">$11,372.21</div>
<div class="t d" style="left:833px;top:381px;width:98px;height:19px;line-height:19px;">13.72%</div>
<div class="t d" style="left:932px;top:381px;width:87px;height:19px;line-height:19px;">-1.00%</div>
<div class="t d" style="left:1020px;top:381px;width:80px;height:19px;line-height:19px;">7</div>
<div class="t d" style="left:1101px;top:381px;width:80px;height:19px;line-height:19px;">$114.87</div>
<div class="t d" style="left:46px;top:401px;width:73px;height:19px;line-height:19px;">8</div>
<div class="t d dr" style="left:381px;top:401px;width:66px;height:19px;line-height:19px;">6.5</div>
<div class="t d" style="left:448px;top:401px;width:68px;height:19px;line-height:19px;">14</div>
<div class="t d" style="left:517px;top:401px;width:91px;height:19px;line-height:19px;">$244.94</div>
<div class="t d" style="left:609px;top:401px;width:110px;height:19px;line-height:19px;">64.8</div>
<div class="t d" style="left:720px;top:401px;width:112px;height:19px;line-height:19px;">$11,617.15</div>
<div class="t d" style="left:833px;top:401px;width:98px;height:19px;line-height:19px;">16.17%</div>
<div class="t d" style="left:932px;top:401px;width:87px;height:19px;line-height:19px;">0.00%</div>
<div class="t d" style="left:1020px;top:401px;width:80px;height:19px;line-height:19px;">8</div>
<div class="t d" style="left:1101px;top:401px;width:80px;height:19px;line-height:19px;">$113.72</div>
<div class="t d" style="left:46px;top:421px;width:73px;height:19px;line-height:19px;">9</div>
<div class="t d dr" style="left:381px;top:421px;width:66px;height:19px;line-height:19px;">8</div>
<div class="t d" style="left:448px;top:421px;width:68px;height:19px;line-height:19px;">-8</div>
<div class="t d rd" style="left:517px;top:421px;width:91px;height:19px;line-height:19px;">-$116.17</div>
<div class="t d" style="left:609px;top:421px;width:110px;height:19px;line-height:19px;">56.8</div>
<div class="t d" style="left:720px;top:421px;width:112px;height:19px;line-height:19px;">$11,500.98</div>
<div class="t d" style="left:833px;top:421px;width:98px;height:19px;line-height:19px;">15.01%</div>
<div class="t d" style="left:932px;top:421px;width:87px;height:19px;line-height:19px;">-1.00%</div>
<div class="t d" style="left:1020px;top:421px;width:80px;height:19px;line-height:19px;">9</div>
<div class="t d" style="left:1101px;top:421px;width:80px;height:19px;line-height:19px;">$116.17</div>
<div class="t d" style="left:46px;top:441px;width:73px;height:19px;line-height:19px;">10</div>
<div class="t d dr" style="left:381px;top:441px;width:66px;height:19px;line-height:19px;">1</div>
<div class="t d" style="left:448px;top:441px;width:68px;height:19px;line-height:19px;">-1</div>
<div class="t d rd" style="left:517px;top:441px;width:91px;height:19px;line-height:19px;">-$115.01</div>
<div class="t d" style="left:609px;top:441px;width:110px;height:19px;line-height:19px;">55.8</div>
<div class="t d" style="left:720px;top:441px;width:112px;height:19px;line-height:19px;">$11,385.97</div>
<div class="t d" style="left:833px;top:441px;width:98px;height:19px;line-height:19px;">13.86%</div>
<div class="t d" style="left:932px;top:441px;width:87px;height:19px;line-height:19px;">-1.99%</div>
<div class="t d" style="left:1020px;top:441px;width:80px;height:19px;line-height:19px;">10</div>
<div class="t d" style="left:1101px;top:441px;width:80px;height:19px;line-height:19px;">$115.01</div>
<div class="t d" style="left:46px;top:461px;width:73px;height:19px;line-height:19px;">11</div>
<div class="t d dr" style="left:381px;top:461px;width:66px;height:19px;line-height:19px;">5</div>
<div class="t d" style="left:448px;top:461px;width:68px;height:19px;line-height:19px;">16</div>
<div class="t d" style="left:517px;top:461px;width:91px;height:19px;line-height:19px;">$364.35</div>
<div class="t d" style="left:609px;top:461px;width:110px;height:19px;line-height:19px;">71.8</div>
<div class="t d" style="left:720px;top:461px;width:112px;height:19px;line-height:19px;">$11,750.32</div>
<div class="t d" style="left:833px;top:461px;width:98px;height:19px;line-height:19px;">17.50%</div>
<div class="t d" style="left:932px;top:461px;width:87px;height:19px;line-height:19px;">0.00%</div>
<div class="t d" style="left:1020px;top:461px;width:80px;height:19px;line-height:19px;">11</div>
<div class="t d" style="left:1101px;top:461px;width:80px;height:19px;line-height:19px;">$113.86</div>
<div class="t d" style="left:46px;top:481px;width:73px;height:19px;line-height:19px;">12</div>
<div class="t d dr" style="left:381px;top:481px;width:66px;height:19px;line-height:19px;">7</div>
<div class="t d" style="left:448px;top:481px;width:68px;height:19px;line-height:19px;">-7</div>
<div class="t d rd" style="left:517px;top:481px;width:91px;height:19px;line-height:19px;">-$117.50</div>
<div class="t d" style="left:609px;top:481px;width:110px;height:19px;line-height:19px;">64.8</div>
<div class="t d" style="left:720px;top:481px;width:112px;height:19px;line-height:19px;">$11,632.82</div>
<div class="t d" style="left:833px;top:481px;width:98px;height:19px;line-height:19px;">16.33%</div>
<div class="t d" style="left:932px;top:481px;width:87px;height:19px;line-height:19px;">-1.00%</div>
<div class="t d" style="left:1020px;top:481px;width:80px;height:19px;line-height:19px;">12</div>
<div class="t d" style="left:1101px;top:481px;width:80px;height:19px;line-height:19px;">$117.50</div>
<div class="t d" style="left:46px;top:501px;width:73px;height:19px;line-height:19px;">13</div>
<div class="t d dr" style="left:381px;top:501px;width:66px;height:19px;line-height:19px;">5</div>
<div class="t d" style="left:448px;top:501px;width:68px;height:19px;line-height:19px;">-5</div>
<div class="t d rd" style="left:517px;top:501px;width:91px;height:19px;line-height:19px;">-$116.33</div>
<div class="t d" style="left:609px;top:501px;width:110px;height:19px;line-height:19px;">59.8</div>
<div class="t d" style="left:720px;top:501px;width:112px;height:19px;line-height:19px;">$11,516.49</div>
<div class="t d" style="left:833px;top:501px;width:98px;height:19px;line-height:19px;">15.16%</div>
<div class="t d" style="left:932px;top:501px;width:87px;height:19px;line-height:19px;">-1.99%</div>
<div class="t d" style="left:1020px;top:501px;width:80px;height:19px;line-height:19px;">13</div>
<div class="t d" style="left:1101px;top:501px;width:80px;height:19px;line-height:19px;">$116.33</div>
<div class="t d" style="left:46px;top:521px;width:73px;height:19px;line-height:19px;">14</div>
<div class="t d dr" style="left:381px;top:521px;width:66px;height:19px;line-height:19px;">5</div>
<div class="t d" style="left:448px;top:521px;width:68px;height:19px;line-height:19px;">-5</div>
<div class="t d rd" style="left:517px;top:521px;width:91px;height:19px;line-height:19px;">-$115.16</div>
<div class="t d" style="left:609px;top:521px;width:110px;height:19px;line-height:19px;">54.8</div>
<div class="t d" style="left:720px;top:521px;width:112px;height:19px;line-height:19px;">$11,401.32</div>
<div class="t d" style="left:833px;top:521px;width:98px;height:19px;line-height:19px;">14.01%</div>
<div class="t d" style="left:932px;top:521px;width:87px;height:19px;line-height:19px;">-2.97%</div>
<div class="t d" style="left:1020px;top:521px;width:80px;height:19px;line-height:19px;">14</div>
<div class="t d" style="left:1101px;top:521px;width:80px;height:19px;line-height:19px;">$115.16</div>
<div class="t d" style="left:46px;top:541px;width:73px;height:19px;line-height:19px;">15</div>
<div class="t d dr" style="left:381px;top:541px;width:66px;height:19px;line-height:19px;">3</div>
<div class="t d" style="left:448px;top:541px;width:68px;height:19px;line-height:19px;">-3</div>
<div class="t d rd" style="left:517px;top:541px;width:91px;height:19px;line-height:19px;">-$114.01</div>
<div class="t d" style="left:609px;top:541px;width:110px;height:19px;line-height:19px;">51.8</div>
<div class="t d" style="left:720px;top:541px;width:112px;height:19px;line-height:19px;">$11,287.31</div>
<div class="t d" style="left:833px;top:541px;width:98px;height:19px;line-height:19px;">12.87%</div>
<div class="t d" style="left:932px;top:541px;width:87px;height:19px;line-height:19px;">-3.94%</div>
<div class="t d" style="left:1020px;top:541px;width:80px;height:19px;line-height:19px;">15</div>
<div class="t d" style="left:1101px;top:541px;width:80px;height:19px;line-height:19px;">$114.01</div>
<div class="t d" style="left:46px;top:561px;width:73px;height:19px;line-height:19px;">16</div>
<div class="t d dr" style="left:381px;top:561px;width:66px;height:19px;line-height:19px;">2</div>
<div class="t d" style="left:448px;top:561px;width:68px;height:19px;line-height:19px;">-2</div>
<div class="t d rd" style="left:517px;top:561px;width:91px;height:19px;line-height:19px;">-$112.87</div>
<div class="t d" style="left:609px;top:561px;width:110px;height:19px;line-height:19px;">49.8</div>
<div class="t d" style="left:720px;top:561px;width:112px;height:19px;line-height:19px;">$11,174.44</div>
<div class="t d" style="left:833px;top:561px;width:98px;height:19px;line-height:19px;">11.74%</div>
<div class="t d" style="left:932px;top:561px;width:87px;height:19px;line-height:19px;">-4.90%</div>
<div class="t d" style="left:1020px;top:561px;width:80px;height:19px;line-height:19px;">16</div>
<div class="t d" style="left:1101px;top:561px;width:80px;height:19px;line-height:19px;">$112.87</div>
<div class="t d" style="left:46px;top:581px;width:73px;height:19px;line-height:19px;">17</div>
<div class="t d dr" style="left:381px;top:581px;width:66px;height:19px;line-height:19px;">4.5</div>
<div class="t d" style="left:448px;top:581px;width:68px;height:19px;line-height:19px;">14</div>
<div class="t d" style="left:517px;top:581px;width:91px;height:19px;line-height:19px;">$347.65</div>
<div class="t d" style="left:609px;top:581px;width:110px;height:19px;line-height:19px;">63.8</div>
<div class="t d" style="left:720px;top:581px;width:112px;height:19px;line-height:19px;">$11,522.09</div>
<div class="t d" style="left:833px;top:581px;width:98px;height:19px;line-height:19px;">15.22%</div>
<div class="t d" style="left:932px;top:581px;width:87px;height:19px;line-height:19px;">-1.94%</div>
<div class="t d" style="left:1020px;top:581px;width:80px;height:19px;line-height:19px;">17</div>
<div class="t d" style="left:1101px;top:581px;width:80px;height:19px;line-height:19px;">$111.74</div>
<div class="t d" style="left:46px;top:601px;width:73px;height:19px;line-height:19px;">18</div>
<div class="t d dr" style="left:381px;top:601px;width:66px;height:19px;line-height:19px;">3</div>
<div class="t d" style="left:448px;top:601px;width:68px;height:19px;line-height:19px;">-3</div>
<div class="t d rd" style="left:517px;top:601px;width:91px;height:19px;line-height:19px;">-$115.22</div>
<div class="t d" style="left:609px;top:601px;width:110px;height:19px;line-height:19px;">60.8</div>
<div class="t d" style="left:720px;top:601px;width:112px;height:19px;line-height:19px;">$11,406.86</div>
<div class="t d" style="left:833px;top:601px;width:98px;height:19px;line-height:19px;">14.07%</div>
<div class="t d" style="left:932px;top:601px;width:87px;height:19px;line-height:19px;">-2.92%</div>
<div class="t d" style="left:1020px;top:601px;width:80px;height:19px;line-height:19px;">18</div>
<div class="t d" style="left:1101px;top:601px;width:80px;height:19px;line-height:19px;">$115.22</div>
<div class="t d" style="left:46px;top:621px;width:73px;height:19px;line-height:19px;">19</div>
<div class="t d dr" style="left:381px;top:621px;width:66px;height:19px;line-height:19px;">8</div>
<div class="t d" style="left:448px;top:621px;width:68px;height:19px;line-height:19px;">34</div>
<div class="t d" style="left:517px;top:621px;width:91px;height:19px;line-height:19px;">$484.79</div>
<div class="t d" style="left:609px;top:621px;width:110px;height:19px;line-height:19px;">94.8</div>
<div class="t d" style="left:720px;top:621px;width:112px;height:19px;line-height:19px;">$11,891.66</div>
<div class="t d" style="left:833px;top:621px;width:98px;height:19px;line-height:19px;">18.92%</div>
<div class="t d" style="left:932px;top:621px;width:87px;height:19px;line-height:19px;">0.00%</div>
<div class="t d" style="left:1020px;top:621px;width:80px;height:19px;line-height:19px;">19</div>
<div class="t d" style="left:1101px;top:621px;width:80px;height:19px;line-height:19px;">$114.07</div>
<div class="t d" style="left:46px;top:641px;width:73px;height:19px;line-height:19px;">20</div>
<div class="t d dr" style="left:381px;top:641px;width:66px;height:19px;line-height:19px;">7</div>
<div class="t d" style="left:448px;top:641px;width:68px;height:19px;line-height:19px;">-7</div>
<div class="t d rd" style="left:517px;top:641px;width:91px;height:19px;line-height:19px;">-$118.92</div>
<div class="t d" style="left:609px;top:641px;width:110px;height:19px;line-height:19px;">87.8</div>
<div class="t d" style="left:720px;top:641px;width:112px;height:19px;line-height:19px;">$11,772.74</div>
<div class="t d" style="left:833px;top:641px;width:98px;height:19px;line-height:19px;">17.73%</div>
<div class="t d" style="left:932px;top:641px;width:87px;height:19px;line-height:19px;">-1.00%</div>
<div class="t d" style="left:1020px;top:641px;width:80px;height:19px;line-height:19px;">20</div>
<div class="t d" style="left:1101px;top:641px;width:80px;height:19px;line-height:19px;">$118.92</div>
<div class="t d" style="left:46px;top:661px;width:73px;height:19px;line-height:19px;">21</div>
<div class="t d dr" style="left:381px;top:661px;width:66px;height:19px;line-height:19px;">5</div>
<div class="t d" style="left:448px;top:661px;width:68px;height:19px;line-height:19px;">-5</div>
<div class="t d rd" style="left:517px;top:661px;width:91px;height:19px;line-height:19px;">-$117.73</div>
<div class="t d" style="left:609px;top:661px;width:110px;height:19px;line-height:19px;">82.8</div>
<div class="t d" style="left:720px;top:661px;width:112px;height:19px;line-height:19px;">$11,655.01</div>
<div class="t d" style="left:833px;top:661px;width:98px;height:19px;line-height:19px;">16.55%</div>
<div class="t d" style="left:932px;top:661px;width:87px;height:19px;line-height:19px;">-1.99%</div>
<div class="t d" style="left:1020px;top:661px;width:80px;height:19px;line-height:19px;">21</div>
<div class="t d" style="left:1101px;top:661px;width:80px;height:19px;line-height:19px;">$117.73</div>
<div class="t d" style="left:46px;top:681px;width:73px;height:19px;line-height:19px;">22</div>
<div class="t d dr" style="left:381px;top:681px;width:66px;height:19px;line-height:19px;">5</div>
<div class="t d" style="left:448px;top:681px;width:68px;height:19px;line-height:19px;">3</div>
<div class="t d" style="left:517px;top:681px;width:91px;height:19px;line-height:19px;">$69.93</div>
<div class="t d" style="left:609px;top:681px;width:110px;height:19px;line-height:19px;">77.8</div>
<div class="t d" style="left:720px;top:681px;width:112px;height:19px;line-height:19px;">$11,724.94</div>
<div class="t d" style="left:833px;top:681px;width:98px;height:19px;line-height:19px;">17.25%</div>
<div class="t d" style="left:932px;top:681px;width:87px;height:19px;line-height:19px;">-1.40%</div>
<div class="t d" style="left:1020px;top:681px;width:80px;height:19px;line-height:19px;">22</div>
<div class="t d" style="left:1101px;top:681px;width:80px;height:19px;line-height:19px;">$116.55</div>
<div class="t d" style="left:46px;top:701px;width:73px;height:19px;line-height:19px;">23</div>
<div class="t d dr" style="left:381px;top:701px;width:66px;height:19px;line-height:19px;">5</div>
<div class="t d" style="left:448px;top:701px;width:68px;height:19px;line-height:19px;">5</div>
<div class="t d" style="left:517px;top:701px;width:91px;height:19px;line-height:19px;">$117.25</div>
<div class="t d" style="left:609px;top:701px;width:110px;height:19px;line-height:19px;">80.8</div>
<div class="t d" style="left:720px;top:701px;width:112px;height:19px;line-height:19px;">$11,842.19</div>
<div class="t d" style="left:833px;top:701px;width:98px;height:19px;line-height:19px;">18.42%</div>
<div class="t d" style="left:932px;top:701px;width:87px;height:19px;line-height:19px;">-0.42%</div>
<div class="t d" style="left:1020px;top:701px;width:80px;height:19px;line-height:19px;">23</div>
<div class="t d" style="left:1101px;top:701px;width:80px;height:19px;line-height:19px;">$117.25</div>
<div class="t d" style="left:46px;top:721px;width:73px;height:19px;line-height:19px;">24</div>
<div class="t d dr" style="left:381px;top:721px;width:66px;height:19px;line-height:19px;">5</div>
<div class="t d" style="left:448px;top:721px;width:68px;height:19px;line-height:19px;">-5</div>
<div class="t d rd" style="left:517px;top:721px;width:91px;height:19px;line-height:19px;">-$118.42</div>
<div class="t d" style="left:609px;top:721px;width:110px;height:19px;line-height:19px;">85.8</div>
<div class="t d" style="left:720px;top:721px;width:112px;height:19px;line-height:19px;">$11,723.77</div>
<div class="t d" style="left:833px;top:721px;width:98px;height:19px;line-height:19px;">17.24%</div>
<div class="t d" style="left:932px;top:721px;width:87px;height:19px;line-height:19px;">-1.41%</div>
<div class="t d" style="left:1020px;top:721px;width:80px;height:19px;line-height:19px;">24</div>
<div class="t d" style="left:1101px;top:721px;width:80px;height:19px;line-height:19px;">$118.42</div>
<div class="t d" style="left:46px;top:741px;width:73px;height:19px;line-height:19px;">25</div>
<div class="t d dr" style="left:381px;top:741px;width:66px;height:19px;line-height:19px;">4</div>
<div class="t d" style="left:448px;top:741px;width:68px;height:19px;line-height:19px;">15</div>
<div class="t d" style="left:517px;top:741px;width:91px;height:19px;line-height:19px;">$439.64</div>
<div class="t d" style="left:609px;top:741px;width:110px;height:19px;line-height:19px;">80.8</div>
<div class="t d" style="left:720px;top:741px;width:112px;height:19px;line-height:19px;">$12,163.41</div>
<div class="t d" style="left:833px;top:741px;width:98px;height:19px;line-height:19px;">21.63%</div>
<div class="t d" style="left:932px;top:741px;width:87px;height:19px;line-height:19px;">0.00%</div>
<div class="t d" style="left:1020px;top:741px;width:80px;height:19px;line-height:19px;">25</div>
<div class="t d" style="left:1101px;top:741px;width:80px;height:19px;line-height:19px;">$117.24</div>
<div class="t d" style="left:46px;top:761px;width:73px;height:19px;line-height:19px;">26</div>
<div class="t d dr" style="left:381px;top:761px;width:66px;height:19px;line-height:19px;">6</div>
<div class="t d" style="left:448px;top:761px;width:68px;height:19px;line-height:19px;">-6</div>
<div class="t d rd" style="left:517px;top:761px;width:91px;height:19px;line-height:19px;">-$121.63</div>
<div class="t d" style="left:609px;top:761px;width:110px;height:19px;line-height:19px;">95.8</div>
<div class="t d" style="left:720px;top:761px;width:112px;height:19px;line-height:19px;">$12,041.78</div>
<div class="t d" style="left:833px;top:761px;width:98px;height:19px;line-height:19px;">20.42%</div>
<div class="t d" style="left:932px;top:761px;width:87px;height:19px;line-height:19px;">-1.00%</div>
<div class="t d" style="left:1020px;top:761px;width:80px;height:19px;line-height:19px;">26</div>
<div class="t d" style="left:1101px;top:761px;width:80px;height:19px;line-height:19px;">$121.63</div>
<div class="t d" style="left:46px;top:781px;width:73px;height:19px;line-height:19px;">27</div>
<div class="t d dr" style="left:381px;top:781px;width:66px;height:19px;line-height:19px;">6</div>
<div class="t d" style="left:448px;top:781px;width:68px;height:19px;line-height:19px;">22</div>
<div class="t d" style="left:517px;top:781px;width:91px;height:19px;line-height:19px;">$441.53</div>
<div class="t d" style="left:609px;top:781px;width:110px;height:19px;line-height:19px;">89.8</div>
<div class="t d" style="left:720px;top:781px;width:112px;height:19px;line-height:19px;">$12,483.31</div>
<div class="t d" style="left:833px;top:781px;width:98px;height:19px;line-height:19px;">24.83%</div>
<div class="t d" style="left:932px;top:781px;width:87px;height:19px;line-height:19px;">0.00%</div>
<div class="t d" style="left:1020px;top:781px;width:80px;height:19px;line-height:19px;">27</div>
<div class="t d" style="left:1101px;top:781px;width:80px;height:19px;line-height:19px;">$120.42</div>
<div class="t d" style="left:46px;top:801px;width:73px;height:19px;line-height:19px;">28</div>
<div class="t d dr" style="left:381px;top:801px;width:66px;height:19px;line-height:19px;">5</div>
<div class="t d" style="left:448px;top:801px;width:68px;height:19px;line-height:19px;">26</div>
<div class="t d" style="left:517px;top:801px;width:91px;height:19px;line-height:19px;">$649.13</div>
<div class="t d" style="left:609px;top:801px;width:110px;height:19px;line-height:19px;">111.8</div>
<div class="t d" style="left:720px;top:801px;width:112px;height:19px;line-height:19px;">$13,132.44</div>
<div class="t d" style="left:833px;top:801px;width:98px;height:19px;line-height:19px;">31.32%</div>
<div class="t d" style="left:932px;top:801px;width:87px;height:19px;line-height:19px;">0.00%</div>
<div class="t d" style="left:1020px;top:801px;width:80px;height:19px;line-height:19px;">28</div>
<div class="t d" style="left:1101px;top:801px;width:80px;height:19px;line-height:19px;">$124.83</div>
<div class="t d" style="left:46px;top:821px;width:73px;height:19px;line-height:19px;">29</div>
<div class="t d dr" style="left:381px;top:821px;width:66px;height:19px;line-height:19px;">12</div>
<div class="t d" style="left:448px;top:821px;width:68px;height:19px;line-height:19px;">-12</div>
<div class="t d rd" style="left:517px;top:821px;width:91px;height:19px;line-height:19px;">-$131.32</div>
<div class="t d" style="left:609px;top:821px;width:110px;height:19px;line-height:19px;">137.8</div>
<div class="t d" style="left:720px;top:821px;width:112px;height:19px;line-height:19px;">$13,001.12</div>
<div class="t d" style="left:833px;top:821px;width:98px;height:19px;line-height:19px;">30.01%</div>
<div class="t d" style="left:932px;top:821px;width:87px;height:19px;line-height:19px;">-1.00%</div>
<div class="t d" style="left:1020px;top:821px;width:80px;height:19px;line-height:19px;">29</div>
<div class="t d" style="left:1101px;top:821px;width:80px;height:19px;line-height:19px;">$131.32</div>
<div class="t d" style="left:46px;top:841px;width:73px;height:19px;line-height:19px;">30</div>
<div class="t d dr" style="left:381px;top:841px;width:66px;height:19px;line-height:19px;">5</div>
<div class="t d" style="left:448px;top:841px;width:68px;height:19px;line-height:19px;">25</div>
<div class="t d" style="left:517px;top:841px;width:91px;height:19px;line-height:19px;">$650.06</div>
<div class="t d" style="left:609px;top:841px;width:110px;height:19px;line-height:19px;">125.8</div>
<div class="t d" style="left:720px;top:841px;width:112px;height:19px;line-height:19px;">$13,651.17</div>
<div class="t d" style="left:833px;top:841px;width:98px;height:19px;line-height:19px;">36.51%</div>
<div class="t d" style="left:932px;top:841px;width:87px;height:19px;line-height:19px;">0.00%</div>
<div class="t d" style="left:1020px;top:841px;width:80px;height:19px;line-height:19px;">30</div>
<div class="t d" style="left:1101px;top:841px;width:80px;height:19px;line-height:19px;">$130.01</div>
<div class="t d" style="left:46px;top:861px;width:73px;height:19px;line-height:19px;">31</div>
<div class="t d dr" style="left:381px;top:861px;width:66px;height:19px;line-height:19px;">8</div>
<div class="t d" style="left:448px;top:861px;width:68px;height:19px;line-height:19px;">25</div>
<div class="t d" style="left:517px;top:861px;width:91px;height:19px;line-height:19px;">$426.60</div>
<div class="t d" style="left:609px;top:861px;width:110px;height:19px;line-height:19px;">150.8</div>
<div class="t d" style="left:720px;top:861px;width:112px;height:19px;line-height:19px;">$14,077.77</div>
<div class="t d" style="left:833px;top:861px;width:98px;height:19px;line-height:19px;">40.78%</div>
<div class="t d" style="left:932px;top:861px;width:87px;height:19px;line-height:19px;">0.00%</div>
<div class="t d" style="left:1020px;top:861px;width:80px;height:19px;line-height:19px;">31</div>
<div class="t d" style="left:1101px;top:861px;width:80px;height:19px;line-height:19px;">$136.51</div>
<div class="t d" style="left:46px;top:881px;width:73px;height:19px;line-height:19px;">32</div>
<div class="t d dr" style="left:381px;top:881px;width:66px;height:19px;line-height:19px;">6</div>
<div class="t d" style="left:448px;top:881px;width:68px;height:19px;line-height:19px;">-6</div>
<div class="t d rd" style="left:517px;top:881px;width:91px;height:19px;line-height:19px;">-$140.78</div>
<div class="t d" style="left:609px;top:881px;width:110px;height:19px;line-height:19px;">175.8</div>
<div class="t d" style="left:720px;top:881px;width:112px;height:19px;line-height:19px;">$13,936.99</div>
<div class="t d" style="left:833px;top:881px;width:98px;height:19px;line-height:19px;">39.37%</div>
<div class="t d" style="left:932px;top:881px;width:87px;height:19px;line-height:19px;">-1.00%</div>
<div class="t d" style="left:1020px;top:881px;width:80px;height:19px;line-height:19px;">32</div>
<div class="t d" style="left:1101px;top:881px;width:80px;height:19px;line-height:19px;">$140.78</div>
<div class="t d" style="left:46px;top:901px;width:73px;height:19px;line-height:19px;">33</div>
<div class="t d dr" style="left:381px;top:901px;width:66px;height:19px;line-height:19px;">6.5</div>
<div class="t d" style="left:448px;top:901px;width:68px;height:19px;line-height:19px;">25</div>
<div class="t d" style="left:517px;top:901px;width:91px;height:19px;line-height:19px;">$536.04</div>
<div class="t d" style="left:609px;top:901px;width:110px;height:19px;line-height:19px;">200.8</div>
<div class="t d" style="left:720px;top:901px;width:112px;height:19px;line-height:19px;">$14,473.03</div>
<div class="t d" style="left:833px;top:901px;width:98px;height:19px;line-height:19px;">44.73%</div>
<div class="t d" style="left:932px;top:901px;width:87px;height:19px;line-height:19px;">0.00%</div>
<div class="t d" style="left:1020px;top:901px;width:80px;height:19px;line-height:19px;">33</div>
<div class="t d" style="left:1101px;top:901px;width:80px;height:19px;line-height:19px;">$139.37</div>
<div class="t d" style="left:46px;top:921px;width:73px;height:19px;line-height:19px;">34</div>
<div class="t d dr" style="left:381px;top:921px;width:66px;height:19px;line-height:19px;">8</div>
<div class="t d" style="left:448px;top:921px;width:68px;height:19px;line-height:19px;">-8</div>
<div class="t d rd" style="left:517px;top:921px;width:91px;height:19px;line-height:19px;">-$144.73</div>
<div class="t d" style="left:609px;top:921px;width:110px;height:19px;line-height:19px;">192.8</div>
<div class="t d" style="left:720px;top:921px;width:112px;height:19px;line-height:19px;">$14,328.30</div>
<div class="t d" style="left:833px;top:921px;width:98px;height:19px;line-height:19px;">43.28%</div>
<div class="t d" style="left:932px;top:921px;width:87px;height:19px;line-height:19px;">-1.00%</div>
<div class="t d" style="left:1020px;top:921px;width:80px;height:19px;line-height:19px;">34</div>
<div class="t d" style="left:1101px;top:921px;width:80px;height:19px;line-height:19px;">$144.73</div>
<div class="t d" style="left:46px;top:941px;width:73px;height:19px;line-height:19px;">35</div>
<div class="t d dr" style="left:381px;top:941px;width:66px;height:19px;line-height:19px;">10</div>
<div class="t d" style="left:448px;top:941px;width:68px;height:19px;line-height:19px;">5</div>
<div class="t d" style="left:517px;top:941px;width:91px;height:19px;line-height:19px;">$71.64</div>
<div class="t d" style="left:609px;top:941px;width:110px;height:19px;line-height:19px;">197.8</div>
<div class="t d" style="left:720px;top:941px;width:112px;height:19px;line-height:19px;">$14,399.94</div>
<div class="t d" style="left:833px;top:941px;width:98px;height:19px;line-height:19px;">44.00%</div>
<div class="t d" style="left:932px;top:941px;width:87px;height:19px;line-height:19px;">-0.51%</div>
<div class="t d" style="left:1020px;top:941px;width:80px;height:19px;line-height:19px;">35</div>
<div class="t d" style="left:1101px;top:941px;width:80px;height:19px;line-height:19px;">$143.28</div>
<div class="t d" style="left:46px;top:961px;width:73px;height:19px;line-height:19px;">36</div>
<div class="t d dr" style="left:381px;top:961px;width:66px;height:19px;line-height:19px;">5</div>
<div class="t d" style="left:448px;top:961px;width:68px;height:19px;line-height:19px;">25</div>
<div class="t d" style="left:517px;top:961px;width:91px;height:19px;line-height:19px;">$720.00</div>
<div class="t d" style="left:609px;top:961px;width:110px;height:19px;line-height:19px;">222.8</div>
<div class="t d" style="left:720px;top:961px;width:112px;height:19px;line-height:19px;">$15,119.94</div>
<div class="t d" style="left:833px;top:961px;width:98px;height:19px;line-height:19px;">51.20%</div>
<div class="t d" style="left:932px;top:961px;width:87px;height:19px;line-height:19px;">0.00%</div>
<div class="t d" style="left:1020px;top:961px;width:80px;height:19px;line-height:19px;">36</div>
<div class="t d" style="left:1101px;top:961px;width:80px;height:19px;line-height:19px;">$144.00</div>
<div class="t d" style="left:46px;top:981px;width:73px;height:19px;line-height:19px;">37</div>
<div class="t d dr" style="left:381px;top:981px;width:66px;height:19px;line-height:19px;">5</div>
<div class="t d" style="left:448px;top:981px;width:68px;height:19px;line-height:19px;">-5</div>
<div class="t d rd" style="left:517px;top:981px;width:91px;height:19px;line-height:19px;">-$151.20</div>
<div class="t d" style="left:609px;top:981px;width:110px;height:19px;line-height:19px;">217.8</div>
<div class="t d" style="left:720px;top:981px;width:112px;height:19px;line-height:19px;">$14,968.74</div>
<div class="t d" style="left:833px;top:981px;width:98px;height:19px;line-height:19px;">49.69%</div>
<div class="t d" style="left:932px;top:981px;width:87px;height:19px;line-height:19px;">-1.00%</div>
<div class="t d" style="left:1020px;top:981px;width:80px;height:19px;line-height:19px;">37</div>
<div class="t d" style="left:1101px;top:981px;width:80px;height:19px;line-height:19px;">$151.20</div>
<div class="t d" style="left:46px;top:1001px;width:73px;height:19px;line-height:19px;">38</div>
<div class="t d dr" style="left:381px;top:1001px;width:66px;height:19px;line-height:19px;">7</div>
<div class="t d" style="left:448px;top:1001px;width:68px;height:19px;line-height:19px;">-7</div>
<div class="t d rd" style="left:517px;top:1001px;width:91px;height:19px;line-height:19px;">-$149.69</div>
<div class="t d" style="left:609px;top:1001px;width:110px;height:19px;line-height:19px;">210.8</div>
<div class="t d" style="left:720px;top:1001px;width:112px;height:19px;line-height:19px;">$14,819.05</div>
<div class="t d" style="left:833px;top:1001px;width:98px;height:19px;line-height:19px;">48.19%</div>
<div class="t d" style="left:932px;top:1001px;width:87px;height:19px;line-height:19px;">-1.99%</div>
<div class="t d" style="left:1020px;top:1001px;width:80px;height:19px;line-height:19px;">38</div>
<div class="t d" style="left:1101px;top:1001px;width:80px;height:19px;line-height:19px;">$149.69</div>
<div style="left:832px;top:280px;width:96px;height:17px;border:2px solid #1a73e8;background:transparent"></div>
<div style="left:927px;top:296px;width:6px;height:6px;background:#1a73e8;border:1px solid #fff"></div>
<div style="left:0px;top:129px;width:1864px;height:23px;background:#f8f9fa;"></div>
<div style="left:833px;top:129px;width:98px;height:23px;background:#e8eaed;"></div>
<div style="left:45px;top:129px;width:1px;height:24px;background:#c0c0c0;"></div>
<div style="left:119px;top:129px;width:1px;height:24px;background:#c0c0c0;"></div>
<div style="left:201px;top:129px;width:1px;height:24px;background:#c0c0c0;"></div>
<div style="left:299px;top:129px;width:1px;height:24px;background:#c0c0c0;"></div>
<div style="left:380px;top:129px;width:1px;height:24px;background:#c0c0c0;"></div>
<div style="left:447px;top:129px;width:1px;height:24px;background:#c0c0c0;"></div>
<div style="left:516px;top:129px;width:1px;height:24px;background:#c0c0c0;"></div>
<div style="left:608px;top:129px;width:1px;height:24px;background:#c0c0c0;"></div>
<div style="left:719px;top:129px;width:1px;height:24px;background:#c0c0c0;"></div>
<div style="left:832px;top:129px;width:1px;height:24px;background:#c0c0c0;"></div>
<div style="left:931px;top:129px;width:1px;height:24px;background:#c0c0c0;"></div>
<div style="left:1019px;top:129px;width:1px;height:24px;background:#c0c0c0;"></div>
<div style="left:1100px;top:129px;width:1px;height:24px;background:#c0c0c0;"></div>
<div style="left:1181px;top:129px;width:1px;height:24px;background:#c0c0c0;"></div>
<div style="left:1262px;top:129px;width:1px;height:24px;background:#c0c0c0;"></div>
<div style="left:1343px;top:129px;width:1px;height:24px;background:#c0c0c0;"></div>
<div style="left:1424px;top:129px;width:1px;height:24px;background:#c0c0c0;"></div>
<div style="left:1505px;top:129px;width:1px;height:24px;background:#c0c0c0;"></div>
<div style="left:1586px;top:129px;width:1px;height:24px;background:#c0c0c0;"></div>
<div style="left:1667px;top:129px;width:1px;height:24px;background:#c0c0c0;"></div>
<div style="left:1748px;top:129px;width:1px;height:24px;background:#c0c0c0;"></div>
<div style="left:1829px;top:129px;width:1px;height:24px;background:#c0c0c0;"></div>
<div style="left:1847px;top:129px;width:1px;height:24px;background:#c0c0c0;"></div>
<div class="t ch" style="left:46px;top:129px;width:73px;height:23px;line-height:23px;">A</div>
<div class="t ch" style="left:120px;top:129px;width:81px;height:23px;line-height:23px;">B</div>
<div class="t ch" style="left:202px;top:129px;width:97px;height:23px;line-height:23px;">C</div>
<div class="t ch" style="left:300px;top:129px;width:80px;height:23px;line-height:23px;">D</div>
<div class="t ch" style="left:381px;top:129px;width:66px;height:23px;line-height:23px;">E</div>
<div class="t ch" style="left:448px;top:129px;width:68px;height:23px;line-height:23px;">F</div>
<div class="t ch" style="left:517px;top:129px;width:91px;height:23px;line-height:23px;">G</div>
<div class="t ch" style="left:609px;top:129px;width:110px;height:23px;line-height:23px;">H</div>
<div class="t ch" style="left:720px;top:129px;width:112px;height:23px;line-height:23px;">I</div>
<div class="t ch" style="left:833px;top:129px;width:98px;height:23px;line-height:23px;">J</div>
<div class="t ch" style="left:932px;top:129px;width:87px;height:23px;line-height:23px;">K</div>
<div class="t ch" style="left:1020px;top:129px;width:80px;height:23px;line-height:23px;">L</div>
<div class="t ch" style="left:1101px;top:129px;width:80px;height:23px;line-height:23px;">M</div>
<div class="t ch" style="left:1182px;top:129px;width:80px;height:23px;line-height:23px;">N</div>
<div class="t ch" style="left:1263px;top:129px;width:80px;height:23px;line-height:23px;">O</div>
<div class="t ch" style="left:1344px;top:129px;width:80px;height:23px;line-height:23px;">P</div>
<div class="t ch" style="left:1425px;top:129px;width:80px;height:23px;line-height:23px;">Q</div>
<div class="t ch" style="left:1506px;top:129px;width:80px;height:23px;line-height:23px;">R</div>
<div class="t ch" style="left:1587px;top:129px;width:80px;height:23px;line-height:23px;">S</div>
<div class="t ch" style="left:1668px;top:129px;width:80px;height:23px;line-height:23px;">T</div>
<div class="t ch" style="left:1749px;top:129px;width:80px;height:23px;line-height:23px;">U</div>
<div style="left:46px;top:152px;width:1801px;height:1px;background:#bdbdbd;"></div>
<div style="left:0px;top:153px;width:45px;height:870px;background:#f8f9fa;"></div>
<div style="left:0px;top:281px;width:45px;height:19px;background:#e8eaed;"></div>
<div style="left:45px;top:153px;width:1px;height:870px;background:#c0c0c0;"></div>
<div style="left:0px;top:189px;width:46px;height:1px;background:#cdcdcd;"></div>
<div class="t rh" style="left:0px;top:152px;width:45px;height:36px;line-height:36px;">1</div>
<div style="left:0px;top:216px;width:46px;height:1px;background:#cdcdcd;"></div>
<div class="t rh" style="left:0px;top:189px;width:45px;height:26px;line-height:26px;">2</div>
<div style="left:0px;top:223px;width:46px;height:1px;background:#cdcdcd;"></div>
<div style="left:0px;top:260px;width:46px;height:1px;background:#cdcdcd;"></div>
<div class="t rh" style="left:0px;top:223px;width:45px;height:36px;line-height:36px;">4</div>
<div style="left:0px;top:280px;width:46px;height:1px;background:#cdcdcd;"></div>
<div class="t rh" style="left:0px;top:261px;width:45px;height:19px;line-height:19px;">5</div>
<div style="left:0px;top:300px;width:46px;height:1px;background:#cdcdcd;"></div>
<div class="t rh" style="left:0px;top:281px;width:45px;height:19px;line-height:19px;">6</div>
<div style="left:0px;top:320px;width:46px;height:1px;background:#cdcdcd;"></div>
<div class="t rh" style="left:0px;top:301px;width:45px;height:19px;line-height:19px;">7</div>
<div style="left:0px;top:340px;width:46px;height:1px;background:#cdcdcd;"></div>
<div class="t rh" style="left:0px;top:321px;width:45px;height:19px;line-height:19px;">8</div>
<div style="left:0px;top:360px;width:46px;height:1px;background:#cdcdcd;"></div>
<div class="t rh" style="left:0px;top:341px;width:45px;height:19px;line-height:19px;">9</div>
<div style="left:0px;top:380px;width:46px;height:1px;background:#cdcdcd;"></div>
<div class="t rh" style="left:0px;top:361px;width:45px;height:19px;line-height:19px;">10</div>
<div style="left:0px;top:400px;width:46px;height:1px;background:#cdcdcd;"></div>
<div class="t rh" style="left:0px;top:381px;width:45px;height:19px;line-height:19px;">11</div>
<div style="left:0px;top:420px;width:46px;height:1px;background:#cdcdcd;"></div>
<div class="t rh" style="left:0px;top:401px;width:45px;height:19px;line-height:19px;">12</div>
<div style="left:0px;top:440px;width:46px;height:1px;background:#cdcdcd;"></div>
<div class="t rh" style="left:0px;top:421px;width:45px;height:19px;line-height:19px;">13</div>
<div style="left:0px;top:460px;width:46px;height:1px;background:#cdcdcd;"></div>
<div class="t rh" style="left:0px;top:441px;width:45px;height:19px;line-height:19px;">14</div>
<div style="left:0px;top:480px;width:46px;height:1px;background:#cdcdcd;"></div>
<div class="t rh" style="left:0px;top:461px;width:45px;height:19px;line-height:19px;">15</div>
<div style="left:0px;top:500px;width:46px;height:1px;background:#cdcdcd;"></div>
<div class="t rh" style="left:0px;top:481px;width:45px;height:19px;line-height:19px;">16</div>
<div style="left:0px;top:520px;width:46px;height:1px;background:#cdcdcd;"></div>
<div class="t rh" style="left:0px;top:501px;width:45px;height:19px;line-height:19px;">17</div>
<div style="left:0px;top:540px;width:46px;height:1px;background:#cdcdcd;"></div>
<div class="t rh" style="left:0px;top:521px;width:45px;height:19px;line-height:19px;">18</div>
<div style="left:0px;top:560px;width:46px;height:1px;background:#cdcdcd;"></div>
<div class="t rh" style="left:0px;top:541px;width:45px;height:19px;line-height:19px;">19</div>
<div style="left:0px;top:580px;width:46px;height:1px;background:#cdcdcd;"></div>
<div class="t rh" style="left:0px;top:561px;width:45px;height:19px;line-height:19px;">20</div>
<div style="left:0px;top:600px;width:46px;height:1px;background:#cdcdcd;"></div>
<div class="t rh" style="left:0px;top:581px;width:45px;height:19px;line-height:19px;">21</div>
<div style="left:0px;top:620px;width:46px;height:1px;background:#cdcdcd;"></div>
<div class="t rh" style="left:0px;top:601px;width:45px;height:19px;line-height:19px;">22</div>
<div style="left:0px;top:640px;width:46px;height:1px;background:#cdcdcd;"></div>
<div class="t rh" style="left:0px;top:621px;width:45px;height:19px;line-height:19px;">23</div>
<div style="left:0px;top:660px;width:46px;height:1px;background:#cdcdcd;"></div>
<div class="t rh" style="left:0px;top:641px;width:45px;height:19px;line-height:19px;">24</div>
<div style="left:0px;top:680px;width:46px;height:1px;background:#cdcdcd;"></div>
<div class="t rh" style="left:0px;top:661px;width:45px;height:19px;line-height:19px;">25</div>
<div style="left:0px;top:700px;width:46px;height:1px;background:#cdcdcd;"></div>
<div class="t rh" style="left:0px;top:681px;width:45px;height:19px;line-height:19px;">26</div>
<div style="left:0px;top:720px;width:46px;height:1px;background:#cdcdcd;"></div>
<div class="t rh" style="left:0px;top:701px;width:45px;height:19px;line-height:19px;">27</div>
<div style="left:0px;top:740px;width:46px;height:1px;background:#cdcdcd;"></div>
<div class="t rh" style="left:0px;top:721px;width:45px;height:19px;line-height:19px;">28</div>
<div style="left:0px;top:760px;width:46px;height:1px;background:#cdcdcd;"></div>
<div class="t rh" style="left:0px;top:741px;width:45px;height:19px;line-height:19px;">29</div>
<div style="left:0px;top:780px;width:46px;height:1px;background:#cdcdcd;"></div>
<div class="t rh" style="left:0px;top:761px;width:45px;height:19px;line-height:19px;">30</div>
<div style="left:0px;top:800px;width:46px;height:1px;background:#cdcdcd;"></div>
<div class="t rh" style="left:0px;top:781px;width:45px;height:19px;line-height:19px;">31</div>
<div style="left:0px;top:820px;width:46px;height:1px;background:#cdcdcd;"></div>
<div class="t rh" style="left:0px;top:801px;width:45px;height:19px;line-height:19px;">32</div>
<div style="left:0px;top:840px;width:46px;height:1px;background:#cdcdcd;"></div>
<div class="t rh" style="left:0px;top:821px;width:45px;height:19px;line-height:19px;">33</div>
<div style="left:0px;top:860px;width:46px;height:1px;background:#cdcdcd;"></div>
<div class="t rh" style="left:0px;top:841px;width:45px;height:19px;line-height:19px;">34</div>
<div style="left:0px;top:880px;width:46px;height:1px;background:#cdcdcd;"></div>
<div class="t rh" style="left:0px;top:861px;width:45px;height:19px;line-height:19px;">35</div>
<div style="left:0px;top:900px;width:46px;height:1px;background:#cdcdcd;"></div>
<div class="t rh" style="left:0px;top:881px;width:45px;height:19px;line-height:19px;">36</div>
<div style="left:0px;top:920px;width:46px;height:1px;background:#cdcdcd;"></div>
<div class="t rh" style="left:0px;top:901px;width:45px;height:19px;line-height:19px;">37</div>
<div style="left:0px;top:940px;width:46px;height:1px;background:#cdcdcd;"></div>
<div class="t rh" style="left:0px;top:921px;width:45px;height:19px;line-height:19px;">38</div>
<div style="left:0px;top:960px;width:46px;height:1px;background:#cdcdcd;"></div>
<div class="t rh" style="left:0px;top:941px;width:45px;height:19px;line-height:19px;">39</div>
<div style="left:0px;top:980px;width:46px;height:1px;background:#cdcdcd;"></div>
<div class="t rh" style="left:0px;top:961px;width:45px;height:19px;line-height:19px;">40</div>
<div style="left:0px;top:1000px;width:46px;height:1px;background:#cdcdcd;"></div>
<div class="t rh" style="left:0px;top:981px;width:45px;height:19px;line-height:19px;">41</div>
<div style="left:0px;top:1020px;width:46px;height:1px;background:#cdcdcd;"></div>
<div class="t rh" style="left:0px;top:1001px;width:45px;height:19px;line-height:19px;">42</div>
<div style="left:0px;top:1040px;width:46px;height:1px;background:#cdcdcd;"></div>
<div class="t rh" style="left:0px;top:1021px;width:45px;height:19px;line-height:19px;">43</div>
<div class="t rh" style="left:0;top:217px;width:45px;height:6px;line-height:17px;overflow:hidden">3</div>
<div style="left:0px;top:129px;width:46px;height:24px;background:#f8f9fa;"></div>
<div style="left:41px;top:129px;width:5px;height:24px;background:#bcbcbc;"></div>
<div style="left:0px;top:148px;width:46px;height:5px;background:#bcbcbc;"></div>
</div>
<!-- header stub above scrollbar -->
<div style="left:1847px;top:129px;width:17px;height:23px;background:#f8f9fa"></div>
<div style="left:1847px;top:129px;width:1px;height:24px;background:#c0c0c0"></div>
<div style="left:1848px;top:152px;width:16px;height:1px;background:#bdbdbd"></div>
<!-- vertical scrollbar -->
<div style="left:1847px;top:153px;width:17px;height:870px;background:#f1f1f1"></div>
<div style="left:1848px;top:170px;width:15px;height:29px;background:#cdcdcd"></div>
<svg style="left:1849px;top:156px;width:13px;height:13px" viewBox="0 0 13 13"><path d="M2.500 8.500l4-4 4 4" fill="none" stroke="#505050" stroke-width="1.900"/></svg>
<svg style="left:1849px;top:1008px;width:13px;height:13px" viewBox="0 0 13 13"><path d="M2.500 4.500l4 4 4-4" fill="none" stroke="#505050" stroke-width="1.900"/></svg>
<!-- horizontal scrollbar -->
<div style="left:0;top:1023px;width:46px;height:17px;background:#f8f9fa"></div>
<div style="left:45px;top:1023px;width:1px;height:17px;background:#c0c0c0"></div>
<div style="left:46px;top:1023px;width:1801px;height:17px;background:#f1f1f1"></div>
<div style="left:63px;top:1024px;width:1063px;height:15px;background:#cdcdcd"></div>
<svg style="left:48px;top:1025px;width:13px;height:13px" viewBox="0 0 13 13"><path d="M8.500 2.500l-4 4 4 4" fill="none" stroke="#505050" stroke-width="1.900"/></svg>
<svg style="left:1832px;top:1025px;width:13px;height:13px" viewBox="0 0 13 13"><path d="M4.500 2.500l4 4-4 4" fill="none" stroke="#505050" stroke-width="1.900"/></svg>
<div style="left:1847px;top:1023px;width:17px;height:17px;background:#f8f8f8;box-shadow:inset 1px 1px 0 #e3e3e3"></div>
<!-- bottom bar -->
<div style="left:0;top:1040px;width:1864px;height:40px;background:#f1f3f4"></div>
<div style="left:0;top:1040px;width:1864px;height:1px;background:#e4e5e7"></div>
<div style="left:117px;top:1040px;width:94px;height:40px;background:#fff;box-shadow:0 1px 3px 1px rgba(60,64,67,.15)"></div>
<svg style="left:51px;top:1054px;width:10px;height:10px;fill:#444746" viewBox="0 0 10 10"><path d="M4.100 0h1.800v4.100H10v1.800H5.900V10H4.100V5.900H0V4.100h4.100z"/></svg>
<svg style="left:81px;top:1054px;width:12px;height:11px;fill:#444746" viewBox="0 0 12 11"><path d="M0 0h12v1.600H0zM0 3.100h12v1.600H0zM0 6.200h12v1.600H0zM0 9.300h12v1.600H0z"/></svg>
<div style="left:132.500px;top:1049px;height:20px;line-height:20px;font-size:14px;color:#188038;white-space:nowrap;letter-spacing:0.25px;-webkit-text-stroke:0.45px #188038">Sheet1</div>
<svg style="left:182px;top:1050px;width:18px;height:18px;fill:#188038" viewBox="0 0 24 24"><path d="M7 10l5 5 5-5z"/></svg>
<!-- explore -->
<div style="left:1759px;top:1041px;width:105px;height:39px;background:#fdfffd;border-left:1px solid #c8c8c8;box-sizing:border-box"></div>
<svg style="left:1772px;top:1051px;width:18px;height:21px" viewBox="0 0 18 21"><path d="M2 0h14a2 2 0 0 1 2 2v14a2 2 0 0 1-2 2h-4.500L9 20.500 6.500 18H2a2 2 0 0 1-2-2V2a2 2 0 0 1 2-2z" fill="#0f9d58"/><path d="M9 3.300c.6 3.400 2.300 5.100 5.700 5.700-3.400.6-5.100 2.300-5.700 5.700-.6-3.400-2.300-5.100-5.700-5.700 3.400-.6 5.100-2.300 5.700-5.700z" fill="#fff"/></svg>
<div style="left:1804px;top:1052px;height:18px;line-height:18px;font-size:12px;color:#0f9d58;white-space:nowrap">Explore</div>
<!-- side panel -->
<div style="left:1864px;top:66px;width:56px;height:1014px;background:#fff"></div>
<div style="left:1864px;top:66px;width:1px;height:1014px;background:#dadce0"></div>
<!-- calendar -->
<svg style="left:1883.500px;top:85px;width:18.500px;height:18.500px" viewBox="0 0 20 20">
<rect x="0" y="0" width="20" height="20" rx="2" fill="#4285f4"/>
<rect x="15" y="0" width="5" height="5" fill="#1967d2"/><rect x="15" y="5" width="5" height="10" fill="#fbbc04"/>
<rect x="0" y="15" width="5" height="5" fill="#188038"/><rect x="5" y="15" width="10" height="5" fill="#34a853"/>
<path d="M15 15h5l-5 5z" fill="#ea4335"/><path d="M20 15v5h-5z" fill="#fff"/>
<rect x="5" y="5" width="10" height="10" fill="#fff"/>
<text x="10" y="13.200" font-family="Liberation Sans" font-weight="bold" font-size="8.600" text-anchor="middle" fill="#4285f4" letter-spacing="-0.400">31</text>
</svg>
<!-- keep -->
<svg style="left:1883px;top:140px;width:20px;height:20px" viewBox="0 0 20 20"><rect width="20" height="20" rx="2" fill="#fbbc04"/><path d="M10 4a3.600 3.600 0 0 0-2 6.600V12h4v-1.400A3.600 3.600 0 0 0 10 4zM8 13.200h4v1.300H8z" fill="#fff"/></svg>
<!-- tasks -->
<svg style="left:1883px;top:196px;width:20px;height:20px" viewBox="0 0 20 20"><circle cx="10" cy="10" r="10" fill="#4285f4"/><circle cx="5.200" cy="10.500" r="1.700" fill="#fbbc04"/><path d="M8.200 14.800L15.300 7" stroke="#fff" stroke-width="2.600" stroke-linecap="round" fill="none"/></svg>
<div style="left:1883px;top:250px;width:20px;height:1px;background:#dadce0"></div>
<svg style="left:1884px;top:286px;width:18px;height:18px;fill:#5f6368" viewBox="0 0 24 24"><path d="M19 13h-6v6h-2v-6H5v-2h6V5h2v6h6v2z"/></svg>
<svg style="left:1882px;top:1042px;width:20px;height:20px;fill:#5f6368" viewBox="0 0 24 24"><path d="M10 6L8.590 7.410 13.170 12l-4.580 4.590L10 18l6-6z"/></svg>

</div></body></html>
